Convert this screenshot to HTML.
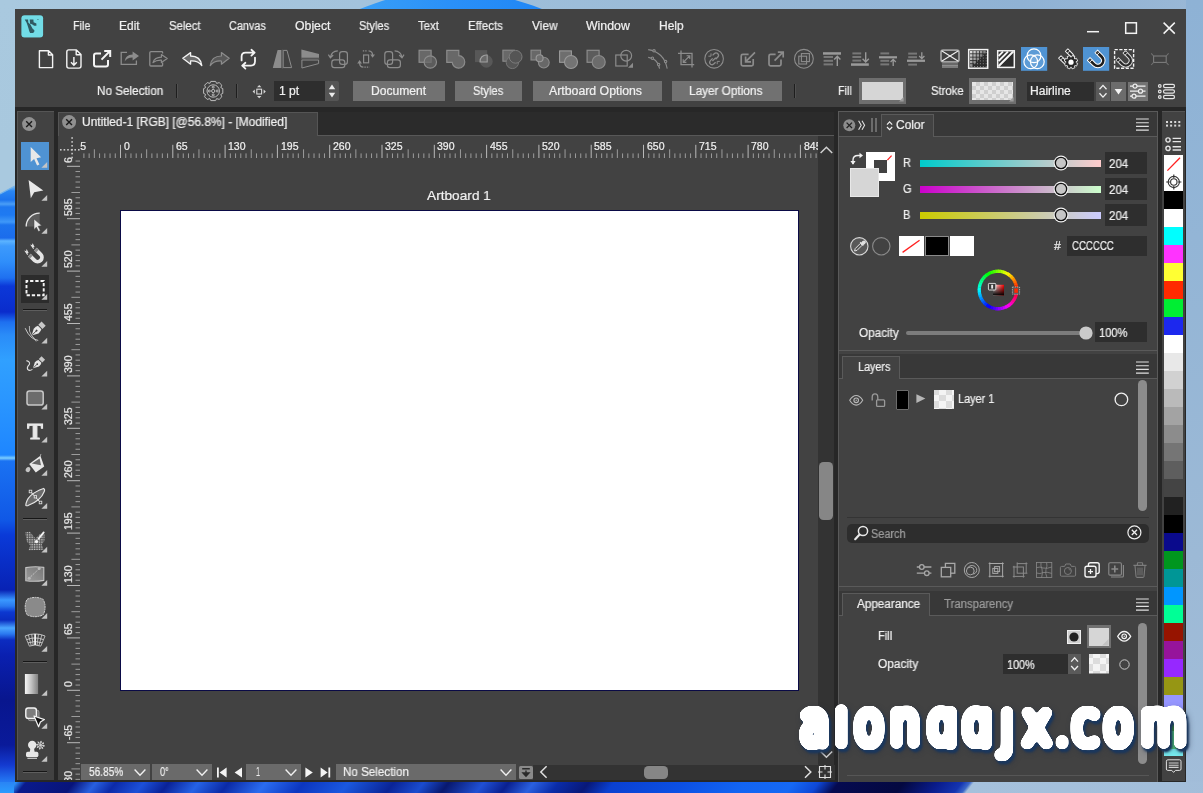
<!DOCTYPE html>
<html><head><meta charset="utf-8"><title>Untitled-1</title>
<style>
html,body{margin:0;padding:0;}
body{width:1203px;height:793px;overflow:hidden;position:relative;background:#9fbdd9;font-family:"Liberation Sans",sans-serif;}
#root{position:absolute;left:0;top:0;width:1203px;height:793px;overflow:hidden;}
#root div,#root span.t,#root svg{position:absolute;}
span.t{white-space:nowrap;line-height:1;transform-origin:0 0;display:block;-webkit-text-stroke:0.22px currentColor;will-change:transform;}
svg{overflow:visible;}
</style></head><body><div id="root">
<div style="left:0px;top:0px;width:1203px;height:793px;background:linear-gradient(90deg,#a9c9df 0%,#a3c3dc 30%,#98b9d7 60%,#8fb2d4 85%,#9ab8d6 100%);"></div>
<div style="left:1186px;top:0px;width:17px;height:793px;background:linear-gradient(180deg,#8eb2d5 0%,#93b5d6 30%,#9cb9d6 70%,#a2bdd9 100%);"></div>
<svg style="left:0;top:0" width="1203" height="12" viewBox="0 0 1203 12"><defs><linearGradient id="tb" x1="0" x2="1"><stop offset="0" stop-color="#3aa0f6"/><stop offset="0.5" stop-color="#2a90f8"/><stop offset="1" stop-color="#1f86f5"/></linearGradient></defs><path d="M352 12 C372 4 385 0 395 -3 L505 -3 C522 2 535 6 550 12 Z" fill="url(#tb)"/></svg>
<div style="left:0px;top:0px;width:15px;height:793px;background:linear-gradient(180deg,#a9c9df 0.00%,#a8c8de 18.92%,#a9c9e0 23.20%,#5aa6ee 23.71%,#2a86f2 24.09%,#1c74ee 25.22%,#4a9ef6 25.73%,#1e78f0 26.10%,#1e7af2 27.11%,#3f98f8 27.99%,#1d74ee 28.37%,#1b6cec 30.01%,#5cb4ff 30.39%,#3d9afc 31.02%,#2f8efa 33.04%,#1f70f0 35.06%,#0c38d8 36.07%,#0a2ccc 39.34%,#1e70f0 40.61%,#2a8cf8 42.24%,#30a0ff 45.40%,#2a96ff 50.44%,#1e86ff 57.38%,#7cceff 57.76%,#1a72f2 58.13%,#1058e6 65.57%,#0a3ad8 67.47%,#0822b4 74.40%,#3a98ff 75.66%,#2a7af0 76.42%,#0c38d0 77.18%,#0a2cc0 78.18%,#4aa6ff 79.19%,#2a78f0 79.95%,#0c2cc0 80.71%,#0a20b0 82.60%,#08168e 88.27%,#0a1a9a 93.95%,#143ad0 96.47%,#2272f0 98.36%,#2a94ff 100.00%);"></div>
<svg style="left:0;top:150px" width="15" height="60" viewBox="0 150 15 60"><path d="M0 150 H15 V186 L0 194 Z" fill="#a9c9df"/><path d="M0 194 L15 186" stroke="#6fb2ee" stroke-width="1.2"/></svg>
<div style="left:0;top:782px;width:1203px;height:11px;overflow:hidden;"><div style="left:-24px;top:0;width:1260px;height:11px;transform:skewX(-38deg);background:linear-gradient(90deg,#2aa0ff 1.90%,#2a8cf5 2.86%,#0a1a8c 3.65%,#08147a 7.46%,#2860e0 9.21%,#0c2aa8 10.79%,#1c50d8 13.02%,#0a2298 15.00%,#2562e6 17.38%,#0b2aa6 19.76%,#2a6cf0 22.70%,#0c36c0 25.71%,#1a58e0 29.29%,#0a2496 32.86%,#1a4cd0 35.24%,#08186e 37.22%,#2050d4 40.00%,#0a2090 41.98%,#2a60e0 43.97%,#0a2ca8 45.95%,#081878 48.33%,#0a40d0 50.32%,#0c50e4 55.87%,#1264f2 60.63%,#1568f4 64.60%,#0e48d8 66.59%,#050a50 68.17%,#040840 73.33%,#0a1c8c 76.11%,#1434b0 77.94%,#3a66c8 78.57%,#a5c1dc 78.89%,#a2bdd9 101.11%);"></div></div>
<div style="left:0px;top:782px;width:14px;height:11px;background:linear-gradient(180deg,#2a84f4,#2a9cff);"></div>
<div style="left:15px;top:9px;width:1171px;height:773px;background:#424242;"></div>
<div style="left:15px;top:107px;width:1171px;height:675px;background:#272727;"></div>
<svg style="left:20.6px;top:14.5px;" width="23.2" height="23.2" viewBox="0 0 23.2 23.2"><rect x="0.1" y="0.1" width="22.3" height="22.6" rx="3.2" fill="#3a3030"/><rect x="0.35" y="0.35" width="21.8" height="22.1" rx="3" fill="#72dce6"/><g transform="translate(-0.7 -0.3)"><path d="M4.4 4.7 H7.8 L8 7.7 L10.1 9.8 L11.4 12.3 L12.2 13.7 L14 15.5 L14.2 16.6 L12.9 18.2 H9.8 L9 16.6 L8.3 14.1 L7.3 10.9 L6.2 7.7 Z" fill="#2f5a62"/><path d="M9.4 4.7 H13.1 L13.3 7.5 L16.1 8.8 V11.1 H13.8 L11.7 9.5 L9.8 9 Z" fill="#2f5a62"/><rect x="17.2" y="4.4" width="0.9" height="0.9" fill="#2f5a62"/></g></svg>
<span class="t" style="left:73.45px;top:19.84px;font-size:12px;color:#f0f0f0;transform:scaleX(0.8992);">File</span>
<span class="t" style="left:119.25px;top:19.84px;font-size:12px;color:#f0f0f0;transform:scaleX(0.9952);">Edit</span>
<span class="t" style="left:169.25px;top:19.84px;font-size:12px;color:#f0f0f0;transform:scaleX(0.9475);">Select</span>
<span class="t" style="left:229.45px;top:19.84px;font-size:12px;color:#f0f0f0;transform:scaleX(0.9042);">Canvas</span>
<span class="t" style="left:294.95px;top:19.84px;font-size:12px;color:#f0f0f0;transform:scaleX(1.0231);">Object</span>
<span class="t" style="left:358.85px;top:19.84px;font-size:12px;color:#f0f0f0;transform:scaleX(0.9205);">Styles</span>
<span class="t" style="left:418.05px;top:19.84px;font-size:12px;color:#f0f0f0;transform:scaleX(0.9455);">Text</span>
<span class="t" style="left:468.05px;top:19.84px;font-size:12px;color:#f0f0f0;transform:scaleX(0.9547);">Effects</span>
<span class="t" style="left:531.95px;top:19.84px;font-size:12px;color:#f0f0f0;transform:scaleX(0.9865);">View</span>
<span class="t" style="left:586.15px;top:19.84px;font-size:12px;color:#f0f0f0;transform:scaleX(1.0258);">Window</span>
<span class="t" style="left:659.05px;top:19.84px;font-size:12px;color:#f0f0f0;transform:scaleX(0.9960);">Help</span>
<svg style="left:1080px;top:15px;" width="100" height="26" viewBox="0 0 100 26"><path d="M7 16.7 H19" stroke="#f4f4f4" stroke-width="1.5" fill="none"/><rect x="45.7" y="7.8" width="10.7" height="10.5" stroke="#f4f4f4" stroke-width="1.5" fill="none"/><path d="M83.6 7.6 L94.8 18.6 M94.8 7.6 L83.6 18.6" stroke="#f4f4f4" stroke-width="1.5" fill="none"/></svg>
<span class="t" style="left:96.95px;top:84.84px;font-size:12px;color:#f0f0f0;transform:scaleX(0.9743);">No Selection</span>
<div style="left:176px;top:84px;width:1px;height:14px;background:#1e1e1e;"></div>
<div style="left:177px;top:84px;width:1px;height:14px;background:#505050;"></div>
<div style="left:236px;top:84px;width:1px;height:14px;background:#1e1e1e;"></div>
<div style="left:237px;top:84px;width:1px;height:14px;background:#505050;"></div>
<div style="left:274px;top:81px;width:51px;height:20px;background:#2e2e2e;"></div>
<div style="left:324.6px;top:81px;width:14.2px;height:20px;background:#555555;border-radius:0 2px 2px 0;"></div>
<span class="t" style="left:279.25px;top:84.84px;font-size:12px;color:#f0f0f0;transform:scaleX(1.0100);">1 pt</span>
<svg style="left:325px;top:81px;" width="14" height="20" viewBox="0 0 14 20"><path d="M3.8 8.2 L7 3.4 L10.2 8.2 Z M3.8 11.8 L7 16.6 L10.2 11.8 Z" fill="#ececec"/></svg>
<div style="left:353px;top:81px;width:91.8px;height:20px;background:#717171;"></div>
<span class="t" style="left:370.85px;top:84.84px;font-size:12px;color:#f0f0f0;transform:scaleX(1.0091);">Document</span>
<div style="left:455.4px;top:81px;width:66.6px;height:20px;background:#717171;"></div>
<span class="t" style="left:472.65px;top:84.84px;font-size:12px;color:#f0f0f0;transform:scaleX(0.9235);">Styles</span>
<div style="left:532.7px;top:81px;width:129.3px;height:20px;background:#717171;"></div>
<span class="t" style="left:549.25px;top:84.84px;font-size:12px;color:#f0f0f0;transform:scaleX(1.0254);">Artboard Options</span>
<div style="left:672.3px;top:81px;width:110px;height:20px;background:#717171;"></div>
<span class="t" style="left:689.45px;top:84.84px;font-size:12px;color:#f0f0f0;transform:scaleX(0.9826);">Layer Options</span>
<div style="left:793.5px;top:84px;width:1px;height:14px;background:#1e1e1e;"></div>
<div style="left:794.5px;top:84px;width:1px;height:14px;background:#505050;"></div>
<span class="t" style="left:838.45px;top:85.44px;font-size:12px;color:#f0f0f0;transform:scaleX(0.8990);">Fill</span>
<div style="left:858.5px;top:78.2px;width:47.3px;height:25.8px;background:#6e6e6e;"></div>
<div style="left:861.7px;top:81.6px;width:41.4px;height:18.8px;background:#d6d6d6;"></div>
<svg style="left:899.4px;top:97px;" width="4.6" height="4.6" viewBox="0 0 4.6 4.6"><path d="M4.6 0 V4.6 H0 Z" fill="#9c9c9c"/></svg>
<span class="t" style="left:930.55px;top:85.44px;font-size:12px;color:#f0f0f0;transform:scaleX(0.9424);">Stroke</span>
<div style="left:968.5px;top:78.2px;width:47.3px;height:25.8px;background:#6e6e6e;"></div>
<div style="left:971.7px;top:81.6px;width:41.4px;height:18.8px;background:#e6e6e6;background-image:linear-gradient(45deg,#cfcfcf 25%,transparent 25%,transparent 75%,#cfcfcf 75%),linear-gradient(45deg,#cfcfcf 25%,transparent 25%,transparent 75%,#cfcfcf 75%);background-size:8px 8px;background-position:0 0,4px 4px;"></div>
<svg style="left:1009.4px;top:97px;" width="4.6" height="4.6" viewBox="0 0 4.6 4.6"><path d="M4.6 0 V4.6 H0 Z" fill="#9c9c9c"/></svg>
<div style="left:1026.5px;top:82px;width:67.5px;height:18.5px;background:#2e2e2e;"></div>
<span class="t" style="left:1030.45px;top:85.44px;font-size:12px;color:#f0f0f0;transform:scaleX(1.0025);">Hairline</span>
<div style="left:1096px;top:82px;width:14px;height:18.5px;background:#5a5a5a;"></div>
<svg style="left:1096px;top:82px;" width="14" height="18.5" viewBox="0 0 14 18.5"><path d="M3.5 7.2 L7 3.4 L10.5 7.2 M3.5 11.3 L7 15.1 L10.5 11.3" stroke="#f0f0f0" stroke-width="1.3" fill="none"/></svg>
<div style="left:1110.5px;top:82px;width:15px;height:18.5px;background:#6c6c6c;"></div>
<svg style="left:1110.5px;top:82px;" width="15" height="18.5" viewBox="0 0 15 18.5"><path d="M3.6 7 H11.4 L7.5 12.6 Z" fill="#f4f4f4"/></svg>
<div style="left:1128px;top:82px;width:19.5px;height:18.5px;background:#737373;"></div>
<svg style="left:1128px;top:82px;" width="19.5" height="18.5" viewBox="0 0 19.5 18.5"><g stroke="#f0f0f0" stroke-width="1.2" fill="#737373"><path d="M2 4.2 H17.5 M2 9.2 H17.5 M2 14.2 H17.5"/><circle cx="7" cy="4.2" r="2"/><circle cx="12.5" cy="9.2" r="2"/><circle cx="6" cy="14.2" r="2"/></g></svg>
<svg style="left:1157px;top:83px;" width="20" height="18" viewBox="0 0 20 18"><g stroke="#e4e4e4" stroke-width="1.2" fill="none"><circle cx="2.8" cy="3" r="1.3"/><circle cx="2.8" cy="8.5" r="1.3"/><circle cx="2.8" cy="14" r="1.3"/><rect x="6.5" y="1.4" width="11" height="3.2" rx="1.6"/><rect x="6.5" y="6.9" width="11" height="3.2" rx="1.6"/><rect x="6.5" y="12.4" width="11" height="3.2" rx="1.6"/></g></svg>
<div style="left:17px;top:111px;width:37px;height:669px;background:#424242;border-left:1px solid #555;border-top:1px solid #555;box-sizing:border-box;"></div>
<svg style="left:21.9px;top:116.8px;" width="14.2" height="14.2" viewBox="0 0 14.2 14.2"><circle cx="7.1" cy="7.1" r="7" fill="#909090"/><path d="M4.2 4.2 L10 10 M10 4.2 L4.2 10" stroke="#1c1c1c" stroke-width="1.4"/></svg>
<div style="left:21px;top:142px;width:28px;height:28px;background:#4f93d3;"></div>
<div style="left:21px;top:274.5px;width:28px;height:28px;background:#2c2c2c;"></div>
<div style="left:23px;top:309px;width:24px;height:1px;background:#161616;"></div>
<div style="left:23px;top:310px;width:24px;height:1px;background:#5e5e5e;"></div>
<div style="left:23px;top:518px;width:24px;height:1px;background:#161616;"></div>
<div style="left:23px;top:519px;width:24px;height:1px;background:#5e5e5e;"></div>
<div style="left:23px;top:661px;width:24px;height:1px;background:#161616;"></div>
<div style="left:23px;top:662px;width:24px;height:1px;background:#5e5e5e;"></div>
<div style="left:23px;top:771px;width:24px;height:1px;background:#161616;"></div>
<div style="left:23px;top:772px;width:24px;height:1px;background:#5e5e5e;"></div>
<div style="left:58px;top:112px;width:776.3px;height:668px;background:#424242;"></div>
<div style="left:58px;top:112px;width:776.3px;height:23.5px;background:#2b2b2b;"></div>
<div style="left:58px;top:135.3px;width:776.3px;height:1px;background:#585858;"></div>
<div style="left:58px;top:112px;width:260.4px;height:24.3px;background:#424242;border-top:1px solid #555;border-left:1px solid #555;border-right:1px solid #555;box-sizing:border-box;"></div>
<svg style="left:61.9px;top:114.8px;" width="14.2" height="14.2" viewBox="0 0 14.2 14.2"><circle cx="7.1" cy="7.1" r="7" fill="#909090"/><path d="M4.2 4.2 L10 10 M10 4.2 L4.2 10" stroke="#1c1c1c" stroke-width="1.4"/></svg>
<span class="t" style="left:81.65px;top:115.84px;font-size:12px;color:#f0f0f0;transform:scaleX(0.9952);">Untitled-1 [RGB] [@56.8%] - [Modified]</span>
<div style="left:818.2px;top:136.3px;width:16px;height:644px;background:#333333;"></div>
<div style="left:533px;top:764.5px;width:301.5px;height:15.5px;background:#333333;"></div>
<svg style="left:819px;top:144px;" width="15" height="12" viewBox="0 0 15 12"><path d="M1.6 9 L7.4 3.2 L13.2 9" stroke="#d0d0d0" stroke-width="1.5" fill="none"/></svg>
<svg style="left:819px;top:748px;" width="15" height="12" viewBox="0 0 15 12"><path d="M1.6 3.5 L7.4 9.3 L13.2 3.5" stroke="#d0d0d0" stroke-width="1.5" fill="none"/></svg>
<div style="left:819.2px;top:461.6px;width:13.8px;height:58.2px;background:#868686;border-radius:4.5px;"></div>
<div style="left:643.5px;top:765.6px;width:24.5px;height:13.6px;background:#868686;border-radius:4.5px;"></div>
<svg style="left:538px;top:765px;" width="12" height="14" viewBox="0 0 12 14"><path d="M8.6 1.2 L2.8 7 L8.6 12.8" stroke="#e0e0e0" stroke-width="1.5" fill="none"/></svg>
<svg style="left:802px;top:765px;" width="12" height="14" viewBox="0 0 12 14"><path d="M3 1.2 L8.8 7 L3 12.8" stroke="#e0e0e0" stroke-width="1.5" fill="none"/></svg>
<svg style="left:818px;top:765px;" width="15" height="15" viewBox="0 0 15 15"><path d="M1.5 1.5 H12.5 V12.5 H1.5 Z M7 0 V4.5 M7 9.5 V14 M0 7 H4.5 M9.5 7 H14" stroke="#e0e0e0" stroke-width="1.1" fill="none"/></svg>
<div style="left:120px;top:210px;width:679px;height:481px;background:#0a0a46;"></div>
<div style="left:121px;top:211px;width:677px;height:479px;background:#ffffff;"></div>
<span class="t" style="left:426.85px;top:188.50px;font-size:13.7px;color:#f2f2f2;transform:scaleX(0.9977);">Artboard 1</span>
<svg style="left:0px;top:0px;shape-rendering:auto;" width="835" height="781" viewBox="0 0 835 781"><rect x="83.39" y="153.4" width="1" height="4.6" fill="#9c9c9c"/><rect x="88.62" y="153.4" width="1" height="4.6" fill="#9c9c9c"/><rect x="93.85" y="149.3" width="1" height="8.7" fill="#9c9c9c"/><rect x="99.08" y="153.4" width="1" height="4.6" fill="#9c9c9c"/><rect x="104.31" y="153.4" width="1" height="4.6" fill="#9c9c9c"/><rect x="109.54" y="153.4" width="1" height="4.6" fill="#9c9c9c"/><rect x="114.77" y="153.4" width="1" height="4.6" fill="#9c9c9c"/><rect x="120.00" y="144.8" width="1" height="13.2" fill="#b8b8b8"/><rect x="125.23" y="153.4" width="1" height="4.6" fill="#9c9c9c"/><rect x="130.46" y="153.4" width="1" height="4.6" fill="#9c9c9c"/><rect x="135.69" y="153.4" width="1" height="4.6" fill="#9c9c9c"/><rect x="140.92" y="153.4" width="1" height="4.6" fill="#9c9c9c"/><rect x="146.15" y="149.3" width="1" height="8.7" fill="#9c9c9c"/><rect x="151.38" y="153.4" width="1" height="4.6" fill="#9c9c9c"/><rect x="156.61" y="153.4" width="1" height="4.6" fill="#9c9c9c"/><rect x="161.84" y="153.4" width="1" height="4.6" fill="#9c9c9c"/><rect x="167.07" y="153.4" width="1" height="4.6" fill="#9c9c9c"/><rect x="172.30" y="144.8" width="1" height="13.2" fill="#b8b8b8"/><rect x="177.53" y="153.4" width="1" height="4.6" fill="#9c9c9c"/><rect x="182.76" y="153.4" width="1" height="4.6" fill="#9c9c9c"/><rect x="187.99" y="153.4" width="1" height="4.6" fill="#9c9c9c"/><rect x="193.22" y="153.4" width="1" height="4.6" fill="#9c9c9c"/><rect x="198.45" y="149.3" width="1" height="8.7" fill="#9c9c9c"/><rect x="203.68" y="153.4" width="1" height="4.6" fill="#9c9c9c"/><rect x="208.91" y="153.4" width="1" height="4.6" fill="#9c9c9c"/><rect x="214.14" y="153.4" width="1" height="4.6" fill="#9c9c9c"/><rect x="219.37" y="153.4" width="1" height="4.6" fill="#9c9c9c"/><rect x="224.60" y="144.8" width="1" height="13.2" fill="#b8b8b8"/><rect x="229.83" y="153.4" width="1" height="4.6" fill="#9c9c9c"/><rect x="235.06" y="153.4" width="1" height="4.6" fill="#9c9c9c"/><rect x="240.29" y="153.4" width="1" height="4.6" fill="#9c9c9c"/><rect x="245.52" y="153.4" width="1" height="4.6" fill="#9c9c9c"/><rect x="250.75" y="149.3" width="1" height="8.7" fill="#9c9c9c"/><rect x="255.98" y="153.4" width="1" height="4.6" fill="#9c9c9c"/><rect x="261.21" y="153.4" width="1" height="4.6" fill="#9c9c9c"/><rect x="266.44" y="153.4" width="1" height="4.6" fill="#9c9c9c"/><rect x="271.67" y="153.4" width="1" height="4.6" fill="#9c9c9c"/><rect x="276.90" y="144.8" width="1" height="13.2" fill="#b8b8b8"/><rect x="282.13" y="153.4" width="1" height="4.6" fill="#9c9c9c"/><rect x="287.36" y="153.4" width="1" height="4.6" fill="#9c9c9c"/><rect x="292.59" y="153.4" width="1" height="4.6" fill="#9c9c9c"/><rect x="297.82" y="153.4" width="1" height="4.6" fill="#9c9c9c"/><rect x="303.05" y="149.3" width="1" height="8.7" fill="#9c9c9c"/><rect x="308.28" y="153.4" width="1" height="4.6" fill="#9c9c9c"/><rect x="313.51" y="153.4" width="1" height="4.6" fill="#9c9c9c"/><rect x="318.74" y="153.4" width="1" height="4.6" fill="#9c9c9c"/><rect x="323.97" y="153.4" width="1" height="4.6" fill="#9c9c9c"/><rect x="329.20" y="144.8" width="1" height="13.2" fill="#b8b8b8"/><rect x="334.43" y="153.4" width="1" height="4.6" fill="#9c9c9c"/><rect x="339.66" y="153.4" width="1" height="4.6" fill="#9c9c9c"/><rect x="344.89" y="153.4" width="1" height="4.6" fill="#9c9c9c"/><rect x="350.12" y="153.4" width="1" height="4.6" fill="#9c9c9c"/><rect x="355.35" y="149.3" width="1" height="8.7" fill="#9c9c9c"/><rect x="360.58" y="153.4" width="1" height="4.6" fill="#9c9c9c"/><rect x="365.81" y="153.4" width="1" height="4.6" fill="#9c9c9c"/><rect x="371.04" y="153.4" width="1" height="4.6" fill="#9c9c9c"/><rect x="376.27" y="153.4" width="1" height="4.6" fill="#9c9c9c"/><rect x="381.50" y="144.8" width="1" height="13.2" fill="#b8b8b8"/><rect x="386.73" y="153.4" width="1" height="4.6" fill="#9c9c9c"/><rect x="391.96" y="153.4" width="1" height="4.6" fill="#9c9c9c"/><rect x="397.19" y="153.4" width="1" height="4.6" fill="#9c9c9c"/><rect x="402.42" y="153.4" width="1" height="4.6" fill="#9c9c9c"/><rect x="407.65" y="149.3" width="1" height="8.7" fill="#9c9c9c"/><rect x="412.88" y="153.4" width="1" height="4.6" fill="#9c9c9c"/><rect x="418.11" y="153.4" width="1" height="4.6" fill="#9c9c9c"/><rect x="423.34" y="153.4" width="1" height="4.6" fill="#9c9c9c"/><rect x="428.57" y="153.4" width="1" height="4.6" fill="#9c9c9c"/><rect x="433.80" y="144.8" width="1" height="13.2" fill="#b8b8b8"/><rect x="439.03" y="153.4" width="1" height="4.6" fill="#9c9c9c"/><rect x="444.26" y="153.4" width="1" height="4.6" fill="#9c9c9c"/><rect x="449.49" y="153.4" width="1" height="4.6" fill="#9c9c9c"/><rect x="454.72" y="153.4" width="1" height="4.6" fill="#9c9c9c"/><rect x="459.95" y="149.3" width="1" height="8.7" fill="#9c9c9c"/><rect x="465.18" y="153.4" width="1" height="4.6" fill="#9c9c9c"/><rect x="470.41" y="153.4" width="1" height="4.6" fill="#9c9c9c"/><rect x="475.64" y="153.4" width="1" height="4.6" fill="#9c9c9c"/><rect x="480.87" y="153.4" width="1" height="4.6" fill="#9c9c9c"/><rect x="486.10" y="144.8" width="1" height="13.2" fill="#b8b8b8"/><rect x="491.33" y="153.4" width="1" height="4.6" fill="#9c9c9c"/><rect x="496.56" y="153.4" width="1" height="4.6" fill="#9c9c9c"/><rect x="501.79" y="153.4" width="1" height="4.6" fill="#9c9c9c"/><rect x="507.02" y="153.4" width="1" height="4.6" fill="#9c9c9c"/><rect x="512.25" y="149.3" width="1" height="8.7" fill="#9c9c9c"/><rect x="517.48" y="153.4" width="1" height="4.6" fill="#9c9c9c"/><rect x="522.71" y="153.4" width="1" height="4.6" fill="#9c9c9c"/><rect x="527.94" y="153.4" width="1" height="4.6" fill="#9c9c9c"/><rect x="533.17" y="153.4" width="1" height="4.6" fill="#9c9c9c"/><rect x="538.40" y="144.8" width="1" height="13.2" fill="#b8b8b8"/><rect x="543.63" y="153.4" width="1" height="4.6" fill="#9c9c9c"/><rect x="548.86" y="153.4" width="1" height="4.6" fill="#9c9c9c"/><rect x="554.09" y="153.4" width="1" height="4.6" fill="#9c9c9c"/><rect x="559.32" y="153.4" width="1" height="4.6" fill="#9c9c9c"/><rect x="564.55" y="149.3" width="1" height="8.7" fill="#9c9c9c"/><rect x="569.78" y="153.4" width="1" height="4.6" fill="#9c9c9c"/><rect x="575.01" y="153.4" width="1" height="4.6" fill="#9c9c9c"/><rect x="580.24" y="153.4" width="1" height="4.6" fill="#9c9c9c"/><rect x="585.47" y="153.4" width="1" height="4.6" fill="#9c9c9c"/><rect x="590.70" y="144.8" width="1" height="13.2" fill="#b8b8b8"/><rect x="595.93" y="153.4" width="1" height="4.6" fill="#9c9c9c"/><rect x="601.16" y="153.4" width="1" height="4.6" fill="#9c9c9c"/><rect x="606.39" y="153.4" width="1" height="4.6" fill="#9c9c9c"/><rect x="611.62" y="153.4" width="1" height="4.6" fill="#9c9c9c"/><rect x="616.85" y="149.3" width="1" height="8.7" fill="#9c9c9c"/><rect x="622.08" y="153.4" width="1" height="4.6" fill="#9c9c9c"/><rect x="627.31" y="153.4" width="1" height="4.6" fill="#9c9c9c"/><rect x="632.54" y="153.4" width="1" height="4.6" fill="#9c9c9c"/><rect x="637.77" y="153.4" width="1" height="4.6" fill="#9c9c9c"/><rect x="643.00" y="144.8" width="1" height="13.2" fill="#b8b8b8"/><rect x="648.23" y="153.4" width="1" height="4.6" fill="#9c9c9c"/><rect x="653.46" y="153.4" width="1" height="4.6" fill="#9c9c9c"/><rect x="658.69" y="153.4" width="1" height="4.6" fill="#9c9c9c"/><rect x="663.92" y="153.4" width="1" height="4.6" fill="#9c9c9c"/><rect x="669.15" y="149.3" width="1" height="8.7" fill="#9c9c9c"/><rect x="674.38" y="153.4" width="1" height="4.6" fill="#9c9c9c"/><rect x="679.61" y="153.4" width="1" height="4.6" fill="#9c9c9c"/><rect x="684.84" y="153.4" width="1" height="4.6" fill="#9c9c9c"/><rect x="690.07" y="153.4" width="1" height="4.6" fill="#9c9c9c"/><rect x="695.30" y="144.8" width="1" height="13.2" fill="#b8b8b8"/><rect x="700.53" y="153.4" width="1" height="4.6" fill="#9c9c9c"/><rect x="705.76" y="153.4" width="1" height="4.6" fill="#9c9c9c"/><rect x="710.99" y="153.4" width="1" height="4.6" fill="#9c9c9c"/><rect x="716.22" y="153.4" width="1" height="4.6" fill="#9c9c9c"/><rect x="721.45" y="149.3" width="1" height="8.7" fill="#9c9c9c"/><rect x="726.68" y="153.4" width="1" height="4.6" fill="#9c9c9c"/><rect x="731.91" y="153.4" width="1" height="4.6" fill="#9c9c9c"/><rect x="737.14" y="153.4" width="1" height="4.6" fill="#9c9c9c"/><rect x="742.37" y="153.4" width="1" height="4.6" fill="#9c9c9c"/><rect x="747.60" y="144.8" width="1" height="13.2" fill="#b8b8b8"/><rect x="752.83" y="153.4" width="1" height="4.6" fill="#9c9c9c"/><rect x="758.06" y="153.4" width="1" height="4.6" fill="#9c9c9c"/><rect x="763.29" y="153.4" width="1" height="4.6" fill="#9c9c9c"/><rect x="768.52" y="153.4" width="1" height="4.6" fill="#9c9c9c"/><rect x="773.75" y="149.3" width="1" height="8.7" fill="#9c9c9c"/><rect x="778.98" y="153.4" width="1" height="4.6" fill="#9c9c9c"/><rect x="784.21" y="153.4" width="1" height="4.6" fill="#9c9c9c"/><rect x="789.44" y="153.4" width="1" height="4.6" fill="#9c9c9c"/><rect x="794.67" y="153.4" width="1" height="4.6" fill="#9c9c9c"/><rect x="799.90" y="144.8" width="1" height="13.2" fill="#b8b8b8"/><rect x="805.13" y="153.4" width="1" height="4.6" fill="#9c9c9c"/><rect x="810.36" y="153.4" width="1" height="4.6" fill="#9c9c9c"/><rect x="815.59" y="153.4" width="1" height="4.6" fill="#9c9c9c"/><rect x="75.5" y="778.88" width="4.5" height="1" fill="#9c9c9c"/><rect x="75.5" y="773.64" width="4.5" height="1" fill="#9c9c9c"/><rect x="71.4" y="768.40" width="8.6" height="1" fill="#9c9c9c"/><rect x="75.5" y="763.16" width="4.5" height="1" fill="#9c9c9c"/><rect x="75.5" y="757.92" width="4.5" height="1" fill="#9c9c9c"/><rect x="75.5" y="752.68" width="4.5" height="1" fill="#9c9c9c"/><rect x="75.5" y="747.44" width="4.5" height="1" fill="#9c9c9c"/><rect x="67" y="742.20" width="13" height="1" fill="#b8b8b8"/><rect x="75.5" y="736.96" width="4.5" height="1" fill="#9c9c9c"/><rect x="75.5" y="731.72" width="4.5" height="1" fill="#9c9c9c"/><rect x="75.5" y="726.48" width="4.5" height="1" fill="#9c9c9c"/><rect x="75.5" y="721.24" width="4.5" height="1" fill="#9c9c9c"/><rect x="71.4" y="716.00" width="8.6" height="1" fill="#9c9c9c"/><rect x="75.5" y="710.76" width="4.5" height="1" fill="#9c9c9c"/><rect x="75.5" y="705.52" width="4.5" height="1" fill="#9c9c9c"/><rect x="75.5" y="700.28" width="4.5" height="1" fill="#9c9c9c"/><rect x="75.5" y="695.04" width="4.5" height="1" fill="#9c9c9c"/><rect x="67" y="689.80" width="13" height="1" fill="#b8b8b8"/><rect x="75.5" y="684.56" width="4.5" height="1" fill="#9c9c9c"/><rect x="75.5" y="679.32" width="4.5" height="1" fill="#9c9c9c"/><rect x="75.5" y="674.08" width="4.5" height="1" fill="#9c9c9c"/><rect x="75.5" y="668.84" width="4.5" height="1" fill="#9c9c9c"/><rect x="71.4" y="663.60" width="8.6" height="1" fill="#9c9c9c"/><rect x="75.5" y="658.36" width="4.5" height="1" fill="#9c9c9c"/><rect x="75.5" y="653.12" width="4.5" height="1" fill="#9c9c9c"/><rect x="75.5" y="647.88" width="4.5" height="1" fill="#9c9c9c"/><rect x="75.5" y="642.64" width="4.5" height="1" fill="#9c9c9c"/><rect x="67" y="637.40" width="13" height="1" fill="#b8b8b8"/><rect x="75.5" y="632.16" width="4.5" height="1" fill="#9c9c9c"/><rect x="75.5" y="626.92" width="4.5" height="1" fill="#9c9c9c"/><rect x="75.5" y="621.68" width="4.5" height="1" fill="#9c9c9c"/><rect x="75.5" y="616.44" width="4.5" height="1" fill="#9c9c9c"/><rect x="71.4" y="611.20" width="8.6" height="1" fill="#9c9c9c"/><rect x="75.5" y="605.96" width="4.5" height="1" fill="#9c9c9c"/><rect x="75.5" y="600.72" width="4.5" height="1" fill="#9c9c9c"/><rect x="75.5" y="595.48" width="4.5" height="1" fill="#9c9c9c"/><rect x="75.5" y="590.24" width="4.5" height="1" fill="#9c9c9c"/><rect x="67" y="585.00" width="13" height="1" fill="#b8b8b8"/><rect x="75.5" y="579.76" width="4.5" height="1" fill="#9c9c9c"/><rect x="75.5" y="574.52" width="4.5" height="1" fill="#9c9c9c"/><rect x="75.5" y="569.28" width="4.5" height="1" fill="#9c9c9c"/><rect x="75.5" y="564.04" width="4.5" height="1" fill="#9c9c9c"/><rect x="71.4" y="558.80" width="8.6" height="1" fill="#9c9c9c"/><rect x="75.5" y="553.56" width="4.5" height="1" fill="#9c9c9c"/><rect x="75.5" y="548.32" width="4.5" height="1" fill="#9c9c9c"/><rect x="75.5" y="543.08" width="4.5" height="1" fill="#9c9c9c"/><rect x="75.5" y="537.84" width="4.5" height="1" fill="#9c9c9c"/><rect x="67" y="532.60" width="13" height="1" fill="#b8b8b8"/><rect x="75.5" y="527.36" width="4.5" height="1" fill="#9c9c9c"/><rect x="75.5" y="522.12" width="4.5" height="1" fill="#9c9c9c"/><rect x="75.5" y="516.88" width="4.5" height="1" fill="#9c9c9c"/><rect x="75.5" y="511.64" width="4.5" height="1" fill="#9c9c9c"/><rect x="71.4" y="506.40" width="8.6" height="1" fill="#9c9c9c"/><rect x="75.5" y="501.16" width="4.5" height="1" fill="#9c9c9c"/><rect x="75.5" y="495.92" width="4.5" height="1" fill="#9c9c9c"/><rect x="75.5" y="490.68" width="4.5" height="1" fill="#9c9c9c"/><rect x="75.5" y="485.44" width="4.5" height="1" fill="#9c9c9c"/><rect x="67" y="480.20" width="13" height="1" fill="#b8b8b8"/><rect x="75.5" y="474.96" width="4.5" height="1" fill="#9c9c9c"/><rect x="75.5" y="469.72" width="4.5" height="1" fill="#9c9c9c"/><rect x="75.5" y="464.48" width="4.5" height="1" fill="#9c9c9c"/><rect x="75.5" y="459.24" width="4.5" height="1" fill="#9c9c9c"/><rect x="71.4" y="454.00" width="8.6" height="1" fill="#9c9c9c"/><rect x="75.5" y="448.76" width="4.5" height="1" fill="#9c9c9c"/><rect x="75.5" y="443.52" width="4.5" height="1" fill="#9c9c9c"/><rect x="75.5" y="438.28" width="4.5" height="1" fill="#9c9c9c"/><rect x="75.5" y="433.04" width="4.5" height="1" fill="#9c9c9c"/><rect x="67" y="427.80" width="13" height="1" fill="#b8b8b8"/><rect x="75.5" y="422.56" width="4.5" height="1" fill="#9c9c9c"/><rect x="75.5" y="417.32" width="4.5" height="1" fill="#9c9c9c"/><rect x="75.5" y="412.08" width="4.5" height="1" fill="#9c9c9c"/><rect x="75.5" y="406.84" width="4.5" height="1" fill="#9c9c9c"/><rect x="71.4" y="401.60" width="8.6" height="1" fill="#9c9c9c"/><rect x="75.5" y="396.36" width="4.5" height="1" fill="#9c9c9c"/><rect x="75.5" y="391.12" width="4.5" height="1" fill="#9c9c9c"/><rect x="75.5" y="385.88" width="4.5" height="1" fill="#9c9c9c"/><rect x="75.5" y="380.64" width="4.5" height="1" fill="#9c9c9c"/><rect x="67" y="375.40" width="13" height="1" fill="#b8b8b8"/><rect x="75.5" y="370.16" width="4.5" height="1" fill="#9c9c9c"/><rect x="75.5" y="364.92" width="4.5" height="1" fill="#9c9c9c"/><rect x="75.5" y="359.68" width="4.5" height="1" fill="#9c9c9c"/><rect x="75.5" y="354.44" width="4.5" height="1" fill="#9c9c9c"/><rect x="71.4" y="349.20" width="8.6" height="1" fill="#9c9c9c"/><rect x="75.5" y="343.96" width="4.5" height="1" fill="#9c9c9c"/><rect x="75.5" y="338.72" width="4.5" height="1" fill="#9c9c9c"/><rect x="75.5" y="333.48" width="4.5" height="1" fill="#9c9c9c"/><rect x="75.5" y="328.24" width="4.5" height="1" fill="#9c9c9c"/><rect x="67" y="323.00" width="13" height="1" fill="#b8b8b8"/><rect x="75.5" y="317.76" width="4.5" height="1" fill="#9c9c9c"/><rect x="75.5" y="312.52" width="4.5" height="1" fill="#9c9c9c"/><rect x="75.5" y="307.28" width="4.5" height="1" fill="#9c9c9c"/><rect x="75.5" y="302.04" width="4.5" height="1" fill="#9c9c9c"/><rect x="71.4" y="296.80" width="8.6" height="1" fill="#9c9c9c"/><rect x="75.5" y="291.56" width="4.5" height="1" fill="#9c9c9c"/><rect x="75.5" y="286.32" width="4.5" height="1" fill="#9c9c9c"/><rect x="75.5" y="281.08" width="4.5" height="1" fill="#9c9c9c"/><rect x="75.5" y="275.84" width="4.5" height="1" fill="#9c9c9c"/><rect x="67" y="270.60" width="13" height="1" fill="#b8b8b8"/><rect x="75.5" y="265.36" width="4.5" height="1" fill="#9c9c9c"/><rect x="75.5" y="260.12" width="4.5" height="1" fill="#9c9c9c"/><rect x="75.5" y="254.88" width="4.5" height="1" fill="#9c9c9c"/><rect x="75.5" y="249.64" width="4.5" height="1" fill="#9c9c9c"/><rect x="71.4" y="244.40" width="8.6" height="1" fill="#9c9c9c"/><rect x="75.5" y="239.16" width="4.5" height="1" fill="#9c9c9c"/><rect x="75.5" y="233.92" width="4.5" height="1" fill="#9c9c9c"/><rect x="75.5" y="228.68" width="4.5" height="1" fill="#9c9c9c"/><rect x="75.5" y="223.44" width="4.5" height="1" fill="#9c9c9c"/><rect x="67" y="218.20" width="13" height="1" fill="#b8b8b8"/><rect x="75.5" y="212.96" width="4.5" height="1" fill="#9c9c9c"/><rect x="75.5" y="207.72" width="4.5" height="1" fill="#9c9c9c"/><rect x="75.5" y="202.48" width="4.5" height="1" fill="#9c9c9c"/><rect x="75.5" y="197.24" width="4.5" height="1" fill="#9c9c9c"/><rect x="71.4" y="192.00" width="8.6" height="1" fill="#9c9c9c"/><rect x="75.5" y="186.76" width="4.5" height="1" fill="#9c9c9c"/><rect x="75.5" y="181.52" width="4.5" height="1" fill="#9c9c9c"/><rect x="75.5" y="176.28" width="4.5" height="1" fill="#9c9c9c"/><rect x="75.5" y="171.04" width="4.5" height="1" fill="#9c9c9c"/><rect x="67" y="165.80" width="13" height="1" fill="#b8b8b8"/><rect x="75.5" y="160.56" width="4.5" height="1" fill="#9c9c9c"/><rect x="60.0" y="149" width="1.6" height="1.6" fill="#c8c8c8"/><rect x="71.3" y="137.2" width="1.6" height="1.6" fill="#c8c8c8"/><rect x="63.6" y="149" width="1.6" height="1.6" fill="#c8c8c8"/><rect x="71.3" y="141.1" width="1.6" height="1.6" fill="#c8c8c8"/><rect x="67.2" y="149" width="1.6" height="1.6" fill="#c8c8c8"/><rect x="71.3" y="145.0" width="1.6" height="1.6" fill="#c8c8c8"/><rect x="70.8" y="149" width="1.6" height="1.6" fill="#c8c8c8"/><rect x="71.3" y="148.9" width="1.6" height="1.6" fill="#c8c8c8"/><rect x="74.4" y="149" width="1.6" height="1.6" fill="#c8c8c8"/><rect x="71.3" y="152.8" width="1.6" height="1.6" fill="#c8c8c8"/><rect x="78.0" y="149" width="1.6" height="1.6" fill="#c8c8c8"/><rect x="71.3" y="156.7" width="1.6" height="1.6" fill="#c8c8c8"/></svg>
<div style="left:80.3px;top:136.3px;width:737.9000000000001px;height:24px;overflow:hidden;">
<span class="t" style="left:-8.90px;top:5.01px;font-size:10.5px;color:#f0f0f0;">-65</span>
<span class="t" style="left:43.40px;top:5.01px;font-size:10.5px;color:#f0f0f0;">0</span>
<span class="t" style="left:95.70px;top:5.01px;font-size:10.5px;color:#f0f0f0;">65</span>
<span class="t" style="left:148.00px;top:5.01px;font-size:10.5px;color:#f0f0f0;">130</span>
<span class="t" style="left:200.30px;top:5.01px;font-size:10.5px;color:#f0f0f0;">195</span>
<span class="t" style="left:252.60px;top:5.01px;font-size:10.5px;color:#f0f0f0;">260</span>
<span class="t" style="left:304.90px;top:5.01px;font-size:10.5px;color:#f0f0f0;">325</span>
<span class="t" style="left:357.20px;top:5.01px;font-size:10.5px;color:#f0f0f0;">390</span>
<span class="t" style="left:409.50px;top:5.01px;font-size:10.5px;color:#f0f0f0;">455</span>
<span class="t" style="left:461.80px;top:5.01px;font-size:10.5px;color:#f0f0f0;">520</span>
<span class="t" style="left:514.10px;top:5.01px;font-size:10.5px;color:#f0f0f0;">585</span>
<span class="t" style="left:566.40px;top:5.01px;font-size:10.5px;color:#f0f0f0;">650</span>
<span class="t" style="left:618.70px;top:5.01px;font-size:10.5px;color:#f0f0f0;">715</span>
<span class="t" style="left:671.00px;top:5.01px;font-size:10.5px;color:#f0f0f0;">780</span>
<span class="t" style="left:723.30px;top:5.01px;font-size:10.5px;color:#f0f0f0;">845</span>
</div>
<div style="left:58.5px;top:157px;width:22px;height:623px;overflow:hidden;will-change:transform;">
<span class="t" style="left:12.70px;top:635.10px;font-size:10.5px;color:#f0f0f0;transform-origin:0 0;transform:rotate(-90deg) scaleX(1.0) translateY(-8.89px);">-130</span>
<span class="t" style="left:12.70px;top:582.70px;font-size:10.5px;color:#f0f0f0;transform-origin:0 0;transform:rotate(-90deg) scaleX(1.0) translateY(-8.89px);">-65</span>
<span class="t" style="left:12.70px;top:530.30px;font-size:10.5px;color:#f0f0f0;transform-origin:0 0;transform:rotate(-90deg) scaleX(1.0) translateY(-8.89px);">0</span>
<span class="t" style="left:12.70px;top:477.90px;font-size:10.5px;color:#f0f0f0;transform-origin:0 0;transform:rotate(-90deg) scaleX(1.0) translateY(-8.89px);">65</span>
<span class="t" style="left:12.70px;top:425.50px;font-size:10.5px;color:#f0f0f0;transform-origin:0 0;transform:rotate(-90deg) scaleX(1.0) translateY(-8.89px);">130</span>
<span class="t" style="left:12.70px;top:373.10px;font-size:10.5px;color:#f0f0f0;transform-origin:0 0;transform:rotate(-90deg) scaleX(1.0) translateY(-8.89px);">195</span>
<span class="t" style="left:12.70px;top:320.70px;font-size:10.5px;color:#f0f0f0;transform-origin:0 0;transform:rotate(-90deg) scaleX(1.0) translateY(-8.89px);">260</span>
<span class="t" style="left:12.70px;top:268.30px;font-size:10.5px;color:#f0f0f0;transform-origin:0 0;transform:rotate(-90deg) scaleX(1.0) translateY(-8.89px);">325</span>
<span class="t" style="left:12.70px;top:215.90px;font-size:10.5px;color:#f0f0f0;transform-origin:0 0;transform:rotate(-90deg) scaleX(1.0) translateY(-8.89px);">390</span>
<span class="t" style="left:12.70px;top:163.50px;font-size:10.5px;color:#f0f0f0;transform-origin:0 0;transform:rotate(-90deg) scaleX(1.0) translateY(-8.89px);">455</span>
<span class="t" style="left:12.70px;top:111.10px;font-size:10.5px;color:#f0f0f0;transform-origin:0 0;transform:rotate(-90deg) scaleX(1.0) translateY(-8.89px);">520</span>
<span class="t" style="left:12.70px;top:58.70px;font-size:10.5px;color:#f0f0f0;transform-origin:0 0;transform:rotate(-90deg) scaleX(1.0) translateY(-8.89px);">585</span>
<span class="t" style="left:12.70px;top:6.30px;font-size:10.5px;color:#f0f0f0;transform-origin:0 0;transform:rotate(-90deg) scaleX(1.0) translateY(-8.89px);">650</span>
</div>
<div style="left:80.5px;top:764.3px;width:69px;height:15.6px;background:#6a6a6a;"></div>
<span class="t" style="left:88.55px;top:766.37px;font-size:12.2px;color:#f0f0f0;transform:scaleX(0.8285);">56.85%</span>
<div style="left:152px;top:764.3px;width:59.8px;height:15.6px;background:#6a6a6a;"></div>
<span class="t" style="left:160.45px;top:766.37px;font-size:12.2px;color:#f0f0f0;transform:scaleX(0.7554);">0°</span>
<div style="left:246px;top:764.3px;width:55.4px;height:15.6px;background:#6a6a6a;"></div>
<span class="t" style="left:255.65px;top:766.37px;font-size:12.2px;color:#f0f0f0;transform:scaleX(0.5882);">1</span>
<div style="left:335.8px;top:764.3px;width:180px;height:15.6px;background:#6a6a6a;"></div>
<span class="t" style="left:342.85px;top:766.37px;font-size:12.2px;color:#f0f0f0;transform:scaleX(0.9544);">No Selection</span>
<svg style="left:132.9px;top:766px;" width="14" height="13" viewBox="0 0 14 13"><path d="M1.6 3.5 L7 9.2 L12.4 3.5" stroke="#f0f0f0" stroke-width="1.4" fill="none"/></svg>
<svg style="left:194.6px;top:766px;" width="14" height="13" viewBox="0 0 14 13"><path d="M1.6 3.5 L7 9.2 L12.4 3.5" stroke="#f0f0f0" stroke-width="1.4" fill="none"/></svg>
<svg style="left:284.4px;top:766px;" width="14" height="13" viewBox="0 0 14 13"><path d="M1.6 3.5 L7 9.2 L12.4 3.5" stroke="#f0f0f0" stroke-width="1.4" fill="none"/></svg>
<svg style="left:498.5px;top:766px;" width="14" height="13" viewBox="0 0 14 13"><path d="M1.6 3.5 L7 9.2 L12.4 3.5" stroke="#f0f0f0" stroke-width="1.4" fill="none"/></svg>
<svg style="left:216px;top:766px;" width="120" height="13" viewBox="0 0 120 13"><g fill="#f4f4f4"><rect x="1" y="1.5" width="1.8" height="10"/><path d="M10.6 1.5 V11.5 L3.6 6.5 Z"/><path d="M26 1.5 V11.5 L18.6 6.5 Z"/><path d="M89.4 1.5 V11.5 L96.8 6.5 Z"/><path d="M104.6 1.5 V11.5 L111.6 6.5 Z"/><rect x="112.4" y="1.5" width="1.8" height="10"/></g></svg>
<div style="left:519px;top:766px;width:14px;height:12.5px;background:#8a8a8a;border-radius:1.5px;"></div>
<svg style="left:519px;top:766px;" width="14" height="12.5" viewBox="0 0 14 12.5"><path d="M3.2 2.8 H10.8 M7 4.5 V8 M4 7 L7 10.3 L10 7 Z" stroke="#2a2a2a" stroke-width="1.4" fill="#2a2a2a"/></svg>
<div style="left:838px;top:111px;width:320.20000000000005px;height:670.8px;background:#424242;border-left:1px solid #5a5a5a;border-right:1px solid #5a5a5a;box-sizing:border-box;"></div>
<div style="left:838px;top:111px;width:320.20000000000005px;height:1px;background:#5a5a5a;"></div>
<div style="left:839px;top:112px;width:318.20000000000005px;height:23.80000000000001px;background:#383838;"></div>
<div style="left:839px;top:135.8px;width:318.20000000000005px;height:1px;background:#5a5a5a;"></div>
<div style="left:881px;top:114.2px;width:53.200000000000045px;height:22.60000000000001px;background:#424242;border-left:1px solid #5a5a5a;border-right:1px solid #5a5a5a;border-top:1px solid #5a5a5a;box-sizing:border-box;"></div>
<svg style="left:843px;top:118.7px;" width="13" height="13" viewBox="0 0 13 13"><circle cx="6.3" cy="6.3" r="6" fill="#8c8c8c"/><path d="M3.6 3.6 L9 9 M9 3.6 L3.6 9" stroke="#222" stroke-width="1.3"/></svg>
<svg style="left:858px;top:120px;" width="8" height="11" viewBox="0 0 8 11"><path d="M0.6 0.8 L3.2 5.3 L0.6 9.8 M4 0.8 L6.6 5.3 L4 9.8" stroke="#e0e0e0" stroke-width="1.1" fill="none"/></svg>
<div style="left:871.3px;top:118px;width:1.6px;height:14px;background:#6c6c6c;"></div>
<div style="left:875.3px;top:118px;width:1.6px;height:14px;background:#6c6c6c;"></div>
<svg style="left:885.5px;top:120.5px;" width="8" height="10" viewBox="0 0 8 10"><path d="M1 3.6 L3.6 0.9 L6.2 3.6 M1 6 L3.6 8.7 L6.2 6" stroke="#f0f0f0" stroke-width="1.2" fill="none"/></svg>
<span class="t" style="left:896.45px;top:119.44px;font-size:12px;color:#f0f0f0;transform:scaleX(0.9930);">Color</span>
<svg style="left:1135.6px;top:118.4px;" width="14" height="13" viewBox="0 0 14 13"><path d="M0 1 H12.8 M0 4.7 H12.8 M0 8.4 H12.8 M0 12.1 H12.8" stroke="#e0e0e0" stroke-width="1.1" fill="none"/></svg>
<div style="left:866px;top:152px;width:28.8px;height:28.8px;background:#ffffff;"></div>
<div style="left:873.8px;top:160px;width:13.2px;height:12.8px;background:#424242;"></div>
<svg style="left:886px;top:153.5px;" width="8" height="8" viewBox="0 0 8 8"><path d="M1.4 6.2 L5.6 1.6" stroke="#ff2020" stroke-width="1.2"/></svg>
<div style="left:849.5px;top:168.4px;width:29.2px;height:28.8px;background:#d6d6d6;border:1px solid #e8e8e8;box-sizing:border-box;"></div>
<svg style="left:850px;top:152.4px;" width="14" height="14" viewBox="0 0 14 14"><path d="M3 12 V8 Q3 3.5 8 3.5 H10" stroke="#f0f0f0" stroke-width="1.4" fill="none"/><path d="M9.5 0.8 L13 3.5 L9.5 6.2 Z M0.4 9 L3 12.8 L5.6 9 Z" fill="#f0f0f0"/></svg>
<span class="t" style="left:903.17px;top:157.44px;font-size:12px;color:#f0f0f0;transform:scaleX(0.9200);">R</span>
<div style="left:920.2px;top:159.79999999999998px;width:181px;height:6.8px;background:linear-gradient(90deg,#00cccc,#ffcccc);"></div>
<svg style="left:1053.4px;top:155.2px;" width="16" height="16" viewBox="0 0 16 16"><circle cx="8" cy="8" r="7.4" fill="#f4f4f4"/><circle cx="8" cy="8" r="6.3" fill="#111"/><circle cx="8" cy="8" r="5" fill="#c6c6c6"/></svg>
<div style="left:1104.7px;top:152.0px;width:42.5px;height:22px;background:#2e2e2e;"></div>
<span class="t" style="left:1109.45px;top:157.64px;font-size:12px;color:#f0f0f0;transform:scaleX(0.9600);">204</span>
<span class="t" style="left:902.85px;top:183.44px;font-size:12px;color:#f0f0f0;transform:scaleX(0.9200);">G</span>
<div style="left:920.2px;top:185.79999999999998px;width:181px;height:6.8px;background:linear-gradient(90deg,#cc00cc,#ccffcc);"></div>
<svg style="left:1053.4px;top:181.2px;" width="16" height="16" viewBox="0 0 16 16"><circle cx="8" cy="8" r="7.4" fill="#f4f4f4"/><circle cx="8" cy="8" r="6.3" fill="#111"/><circle cx="8" cy="8" r="5" fill="#c6c6c6"/></svg>
<div style="left:1104.7px;top:178.0px;width:42.5px;height:22px;background:#2e2e2e;"></div>
<span class="t" style="left:1109.45px;top:183.64px;font-size:12px;color:#f0f0f0;transform:scaleX(0.9600);">204</span>
<span class="t" style="left:903.47px;top:209.44px;font-size:12px;color:#f0f0f0;transform:scaleX(0.9200);">B</span>
<div style="left:920.2px;top:211.79999999999998px;width:181px;height:6.8px;background:linear-gradient(90deg,#cccc00,#ccccff);"></div>
<svg style="left:1053.4px;top:207.2px;" width="16" height="16" viewBox="0 0 16 16"><circle cx="8" cy="8" r="7.4" fill="#f4f4f4"/><circle cx="8" cy="8" r="6.3" fill="#111"/><circle cx="8" cy="8" r="5" fill="#c6c6c6"/></svg>
<div style="left:1104.7px;top:204.0px;width:42.5px;height:22px;background:#2e2e2e;"></div>
<span class="t" style="left:1109.45px;top:209.64px;font-size:12px;color:#f0f0f0;transform:scaleX(0.9600);">204</span>
<svg style="left:849.5px;top:236.5px;" width="19" height="19" viewBox="0 0 19 19"><circle cx="9.3" cy="9.3" r="8.7" stroke="#d8d8d8" stroke-width="1.1" fill="#585858"/><path d="M4.6 14 L5.2 11.6 L10.4 6.4 L12.2 8.2 L7 13.4 Z" stroke="#e0e0e0" stroke-width="1" fill="none"/><path d="M10.2 5.2 L13.4 8.4 M11.4 6.6 L13 4.6 Q14.4 3.6 15 4.6 Q15.6 5.6 14.4 6.4 L12.6 7.8" stroke="#e0e0e0" stroke-width="1.4" fill="#e0e0e0"/></svg>
<svg style="left:871.8px;top:236.5px;" width="19" height="19" viewBox="0 0 19 19"><circle cx="9.3" cy="9.3" r="8.7" stroke="#8a8a8a" stroke-width="1.1" fill="none"/></svg>
<div style="left:899.3px;top:236.2px;width:24.3px;height:19.4px;background:#ffffff;"></div>
<svg style="left:899.4px;top:236.6px;" width="24.2" height="18.6" viewBox="0 0 24.2 18.6"><path d="M3.6 15.4 L20.6 3.2" stroke="#ff2020" stroke-width="1.3"/></svg>
<div style="left:924.6px;top:236.2px;width:24px;height:19.4px;background:#000000;border:1px solid #8a8a8a;box-sizing:border-box;"></div>
<div style="left:949.6px;top:236.2px;width:24.3px;height:19.4px;background:#ffffff;"></div>
<span class="t" style="left:1054.45px;top:240.24px;font-size:12px;color:#f0f0f0;transform:scaleX(1.0226);">#</span>
<div style="left:1067px;top:236px;width:80.2px;height:19.8px;background:#2e2e2e;"></div>
<span class="t" style="left:1071.65px;top:240.24px;font-size:12px;color:#f0f0f0;transform:scaleX(0.8038);">CCCCCC</span>
<svg style="left:976.2px;top:268px;" width="44" height="44" viewBox="-22 -22 44 44"><path d="M0.00 -20.40 A20.4 20.4 0 0 1 3.06 -20.17 L2.56 -16.91 A17.1 17.1 0 0 0 0.00 -17.10 Z" fill="#8fff00"/><path d="M2.66 -20.23 A20.4 20.4 0 0 1 5.67 -19.60 L4.75 -16.43 A17.1 17.1 0 0 0 2.23 -16.95 Z" fill="#afff00"/><path d="M5.28 -19.70 A20.4 20.4 0 0 1 8.18 -18.69 L6.85 -15.67 A17.1 17.1 0 0 0 4.43 -16.52 Z" fill="#cfff00"/><path d="M7.81 -18.85 A20.4 20.4 0 0 1 10.54 -17.46 L8.84 -14.64 A17.1 17.1 0 0 0 6.54 -15.80 Z" fill="#efff00"/><path d="M10.20 -17.67 A20.4 20.4 0 0 1 12.73 -15.94 L10.67 -13.36 A17.1 17.1 0 0 0 8.55 -14.81 Z" fill="#ffef00"/><path d="M12.42 -16.18 A20.4 20.4 0 0 1 14.71 -14.14 L12.33 -11.85 A17.1 17.1 0 0 0 10.41 -13.57 Z" fill="#ffcf00"/><path d="M14.42 -14.42 A20.4 20.4 0 0 1 16.43 -12.10 L13.77 -10.14 A17.1 17.1 0 0 0 12.09 -12.09 Z" fill="#ffaf00"/><path d="M16.18 -12.42 A20.4 20.4 0 0 1 17.86 -9.85 L14.97 -8.26 A17.1 17.1 0 0 0 13.57 -10.41 Z" fill="#ff8f00"/><path d="M17.67 -10.20 A20.4 20.4 0 0 1 19.00 -7.44 L15.92 -6.23 A17.1 17.1 0 0 0 14.81 -8.55 Z" fill="#ff6f00"/><path d="M18.85 -7.81 A20.4 20.4 0 0 1 19.80 -4.89 L16.60 -4.10 A17.1 17.1 0 0 0 15.80 -6.54 Z" fill="#ff4f00"/><path d="M19.70 -5.28 A20.4 20.4 0 0 1 20.27 -2.27 L16.99 -1.90 A17.1 17.1 0 0 0 16.52 -4.43 Z" fill="#ff2f00"/><path d="M20.23 -2.66 A20.4 20.4 0 0 1 20.40 0.40 L17.10 0.34 A17.1 17.1 0 0 0 16.95 -2.23 Z" fill="#ff0f00"/><path d="M20.40 -0.00 A20.4 20.4 0 0 1 20.17 3.06 L16.91 2.56 A17.1 17.1 0 0 0 17.10 -0.00 Z" fill="#ff000f"/><path d="M20.23 2.66 A20.4 20.4 0 0 1 19.60 5.67 L16.43 4.75 A17.1 17.1 0 0 0 16.95 2.23 Z" fill="#ff002f"/><path d="M19.70 5.28 A20.4 20.4 0 0 1 18.69 8.18 L15.67 6.85 A17.1 17.1 0 0 0 16.52 4.43 Z" fill="#ff004f"/><path d="M18.85 7.81 A20.4 20.4 0 0 1 17.46 10.54 L14.64 8.84 A17.1 17.1 0 0 0 15.80 6.54 Z" fill="#ff006f"/><path d="M17.67 10.20 A20.4 20.4 0 0 1 15.94 12.73 L13.36 10.67 A17.1 17.1 0 0 0 14.81 8.55 Z" fill="#ff008f"/><path d="M16.18 12.42 A20.4 20.4 0 0 1 14.14 14.71 L11.85 12.33 A17.1 17.1 0 0 0 13.57 10.41 Z" fill="#ff00af"/><path d="M14.42 14.42 A20.4 20.4 0 0 1 12.10 16.43 L10.14 13.77 A17.1 17.1 0 0 0 12.09 12.09 Z" fill="#ff00cf"/><path d="M12.42 16.18 A20.4 20.4 0 0 1 9.85 17.86 L8.26 14.97 A17.1 17.1 0 0 0 10.41 13.57 Z" fill="#ff00ef"/><path d="M10.20 17.67 A20.4 20.4 0 0 1 7.44 19.00 L6.23 15.92 A17.1 17.1 0 0 0 8.55 14.81 Z" fill="#ef00ff"/><path d="M7.81 18.85 A20.4 20.4 0 0 1 4.89 19.80 L4.10 16.60 A17.1 17.1 0 0 0 6.54 15.80 Z" fill="#cf00ff"/><path d="M5.28 19.70 A20.4 20.4 0 0 1 2.27 20.27 L1.90 16.99 A17.1 17.1 0 0 0 4.43 16.52 Z" fill="#af00ff"/><path d="M2.66 20.23 A20.4 20.4 0 0 1 -0.40 20.40 L-0.34 17.10 A17.1 17.1 0 0 0 2.23 16.95 Z" fill="#8f00ff"/><path d="M0.00 20.40 A20.4 20.4 0 0 1 -3.06 20.17 L-2.56 16.91 A17.1 17.1 0 0 0 0.00 17.10 Z" fill="#6f00ff"/><path d="M-2.66 20.23 A20.4 20.4 0 0 1 -5.67 19.60 L-4.75 16.43 A17.1 17.1 0 0 0 -2.23 16.95 Z" fill="#4f00ff"/><path d="M-5.28 19.70 A20.4 20.4 0 0 1 -8.18 18.69 L-6.85 15.67 A17.1 17.1 0 0 0 -4.43 16.52 Z" fill="#2f00ff"/><path d="M-7.81 18.85 A20.4 20.4 0 0 1 -10.54 17.46 L-8.84 14.64 A17.1 17.1 0 0 0 -6.54 15.80 Z" fill="#0f00ff"/><path d="M-10.20 17.67 A20.4 20.4 0 0 1 -12.73 15.94 L-10.67 13.36 A17.1 17.1 0 0 0 -8.55 14.81 Z" fill="#000fff"/><path d="M-12.42 16.18 A20.4 20.4 0 0 1 -14.71 14.14 L-12.33 11.85 A17.1 17.1 0 0 0 -10.41 13.57 Z" fill="#002fff"/><path d="M-14.42 14.42 A20.4 20.4 0 0 1 -16.43 12.10 L-13.77 10.14 A17.1 17.1 0 0 0 -12.09 12.09 Z" fill="#004fff"/><path d="M-16.18 12.42 A20.4 20.4 0 0 1 -17.86 9.85 L-14.97 8.26 A17.1 17.1 0 0 0 -13.57 10.41 Z" fill="#006fff"/><path d="M-17.67 10.20 A20.4 20.4 0 0 1 -19.00 7.44 L-15.92 6.23 A17.1 17.1 0 0 0 -14.81 8.55 Z" fill="#008fff"/><path d="M-18.85 7.81 A20.4 20.4 0 0 1 -19.80 4.89 L-16.60 4.10 A17.1 17.1 0 0 0 -15.80 6.54 Z" fill="#00afff"/><path d="M-19.70 5.28 A20.4 20.4 0 0 1 -20.27 2.27 L-16.99 1.90 A17.1 17.1 0 0 0 -16.52 4.43 Z" fill="#00cfff"/><path d="M-20.23 2.66 A20.4 20.4 0 0 1 -20.40 -0.40 L-17.10 -0.34 A17.1 17.1 0 0 0 -16.95 2.23 Z" fill="#00efff"/><path d="M-20.40 0.00 A20.4 20.4 0 0 1 -20.17 -3.06 L-16.91 -2.56 A17.1 17.1 0 0 0 -17.10 0.00 Z" fill="#00ffef"/><path d="M-20.23 -2.66 A20.4 20.4 0 0 1 -19.60 -5.67 L-16.43 -4.75 A17.1 17.1 0 0 0 -16.95 -2.23 Z" fill="#00ffcf"/><path d="M-19.70 -5.28 A20.4 20.4 0 0 1 -18.69 -8.18 L-15.67 -6.85 A17.1 17.1 0 0 0 -16.52 -4.43 Z" fill="#00ffaf"/><path d="M-18.85 -7.81 A20.4 20.4 0 0 1 -17.46 -10.54 L-14.64 -8.84 A17.1 17.1 0 0 0 -15.80 -6.54 Z" fill="#00ff8f"/><path d="M-17.67 -10.20 A20.4 20.4 0 0 1 -15.94 -12.73 L-13.36 -10.67 A17.1 17.1 0 0 0 -14.81 -8.55 Z" fill="#00ff6f"/><path d="M-16.18 -12.42 A20.4 20.4 0 0 1 -14.14 -14.71 L-11.85 -12.33 A17.1 17.1 0 0 0 -13.57 -10.41 Z" fill="#00ff4f"/><path d="M-14.42 -14.42 A20.4 20.4 0 0 1 -12.10 -16.43 L-10.14 -13.77 A17.1 17.1 0 0 0 -12.09 -12.09 Z" fill="#00ff2f"/><path d="M-12.42 -16.18 A20.4 20.4 0 0 1 -9.85 -17.86 L-8.26 -14.97 A17.1 17.1 0 0 0 -10.41 -13.57 Z" fill="#00ff0f"/><path d="M-10.20 -17.67 A20.4 20.4 0 0 1 -7.44 -19.00 L-6.23 -15.92 A17.1 17.1 0 0 0 -8.55 -14.81 Z" fill="#0fff00"/><path d="M-7.81 -18.85 A20.4 20.4 0 0 1 -4.89 -19.80 L-4.10 -16.60 A17.1 17.1 0 0 0 -6.54 -15.80 Z" fill="#2fff00"/><path d="M-5.28 -19.70 A20.4 20.4 0 0 1 -2.27 -20.27 L-1.90 -16.99 A17.1 17.1 0 0 0 -4.43 -16.52 Z" fill="#4fff00"/><path d="M-2.66 -20.23 A20.4 20.4 0 0 1 0.40 -20.40 L0.34 -17.10 A17.1 17.1 0 0 0 -2.23 -16.95 Z" fill="#6fff00"/><defs><linearGradient id="sq1" x1="0" x2="1" y1="0" y2="0"><stop offset="0" stop-color="#fff"/><stop offset="1" stop-color="#f00"/></linearGradient><linearGradient id="sq2" x1="0" x2="0" y1="0" y2="1"><stop offset="0" stop-color="#000" stop-opacity="0"/><stop offset="1" stop-color="#000"/></linearGradient></defs><rect x="-5" y="-5.2" width="11" height="10.6" fill="url(#sq1)"/><rect x="-5" y="-5.2" width="11" height="10.6" fill="url(#sq2)"/><rect x="-9.6" y="-6.6" width="7.4" height="6.6" rx="0.8" fill="#3a3a3a" stroke="#e8e8e8" stroke-width="0.9"/><rect x="-6.8" y="-5.2" width="1.9" height="3.8" fill="#e8e8e8"/><rect x="14.4" y="-3" width="7.2" height="7.2" fill="#555" stroke="#b0b0b0" stroke-width="0.9" stroke-dasharray="1.4 0.9"/><rect x="16.3" y="-1.6" width="3.6" height="4.4" fill="#ff2a00"/></svg>
<span class="t" style="left:858.65px;top:326.84px;font-size:12px;color:#f0f0f0;transform:scaleX(0.9779);">Opacity</span>
<div style="left:906px;top:330.6px;width:178px;height:4.4px;background:#7c7c7c;border-radius:2px;"></div>
<svg style="left:1078.6px;top:325.6px;" width="14" height="14" viewBox="0 0 14 14"><circle cx="7" cy="7" r="6.6" fill="#cacaca"/></svg>
<div style="left:1094.8px;top:322.2px;width:52.4px;height:19.6px;background:#2e2e2e;"></div>
<span class="t" style="left:1099.45px;top:326.64px;font-size:12px;color:#f0f0f0;transform:scaleX(0.9251);">100%</span>
<div style="left:838px;top:349.5px;width:320.20000000000005px;height:1px;background:#5a5a5a;"></div>
<div style="left:839px;top:353.8px;width:318.20000000000005px;height:24.2px;background:#383838;"></div>
<div style="left:839px;top:378px;width:318.20000000000005px;height:1px;background:#5a5a5a;"></div>
<div style="left:842px;top:356.2px;width:57.700000000000045px;height:22.80000000000001px;background:#424242;border-left:1px solid #5a5a5a;border-right:1px solid #5a5a5a;border-top:1px solid #5a5a5a;box-sizing:border-box;"></div>
<span class="t" style="left:857.55px;top:361.24px;font-size:12px;color:#f0f0f0;transform:scaleX(0.9000);">Layers</span>
<svg style="left:1135.6px;top:360.6px;" width="14" height="13" viewBox="0 0 14 13"><path d="M0 1 H12.8 M0 4.7 H12.8 M0 8.4 H12.8 M0 12.1 H12.8" stroke="#e0e0e0" stroke-width="1.1" fill="none"/></svg>
<svg style="left:848.8px;top:393.5px;" width="15" height="13" viewBox="0 0 15 13"><path d="M0.7 6.3 Q3.6 1.5 7.2 1.5 Q10.8 1.5 13.7 6.3 Q10.8 11.1 7.2 11.1 Q3.6 11.1 0.7 6.3 Z" stroke="#b8b8b8" stroke-width="1.1" fill="none" stroke-linejoin="round"/><circle cx="7.2" cy="6.3" r="2.3" stroke="#b8b8b8" stroke-width="1.1" fill="none"/><circle cx="7.2" cy="6.3" r="0.7" fill="#b8b8b8"/></svg>
<svg style="left:870.8px;top:392.6px;" width="15" height="15" viewBox="0 0 15 15"><path d="M1.2 7.4 V4.2 Q1.2 0.9 4 0.9 Q6.8 0.9 6.8 4.2 V7" stroke="#9a9a9a" stroke-width="1.3" fill="none"/><rect x="5.6" y="6.8" width="8" height="6.6" rx="1" stroke="#9a9a9a" stroke-width="1.3" fill="none"/></svg>
<div style="left:896.2px;top:389.5px;width:13px;height:20px;background:#000;border:1px solid #6c6c6c;box-sizing:border-box;border-radius:1px;"></div>
<svg style="left:916px;top:394px;" width="10" height="10" viewBox="0 0 10 10"><path d="M0.4 0.3 L9.4 4.6 L0.4 8.9 Z" fill="#b6b6b6"/></svg>
<svg style="left:934.2px;top:389.5px;overflow:hidden;" width="20" height="19.8" viewBox="0 0 20 19.8"><clipPath id="ck934"><rect x="0" y="0" width="20" height="19.8"/></clipPath><g clip-path="url(#ck934)" shape-rendering="crispEdges"><rect x="-1.70" y="-1.70" width="6.72" height="6.65" fill="#dcdcdc"/><rect x="-1.70" y="4.90" width="6.72" height="6.65" fill="#f4f4f4"/><rect x="-1.70" y="11.50" width="6.72" height="6.65" fill="#dcdcdc"/><rect x="-1.70" y="18.10" width="6.72" height="6.65" fill="#f4f4f4"/><rect x="4.97" y="-1.70" width="6.72" height="6.65" fill="#f4f4f4"/><rect x="4.97" y="4.90" width="6.72" height="6.65" fill="#dcdcdc"/><rect x="4.97" y="11.50" width="6.72" height="6.65" fill="#f4f4f4"/><rect x="4.97" y="18.10" width="6.72" height="6.65" fill="#dcdcdc"/><rect x="11.63" y="-1.70" width="6.72" height="6.65" fill="#dcdcdc"/><rect x="11.63" y="4.90" width="6.72" height="6.65" fill="#f4f4f4"/><rect x="11.63" y="11.50" width="6.72" height="6.65" fill="#dcdcdc"/><rect x="11.63" y="18.10" width="6.72" height="6.65" fill="#f4f4f4"/><rect x="18.30" y="-1.70" width="6.72" height="6.65" fill="#f4f4f4"/><rect x="18.30" y="4.90" width="6.72" height="6.65" fill="#dcdcdc"/><rect x="18.30" y="11.50" width="6.72" height="6.65" fill="#f4f4f4"/><rect x="18.30" y="18.10" width="6.72" height="6.65" fill="#dcdcdc"/></g></svg>
<span class="t" style="left:957.85px;top:393.04px;font-size:12px;color:#f0f0f0;transform:scaleX(0.9089);">Layer 1</span>
<svg style="left:1113.6px;top:392.4px;" width="15" height="15" viewBox="0 0 15 15"><circle cx="7.4" cy="7.4" r="6.3" stroke="#f0f0f0" stroke-width="1.3" fill="none"/></svg>
<div style="left:1138.2px;top:380px;width:9.2px;height:130.5px;background:#8c8c8c;border-radius:4.5px;"></div>
<div style="left:847px;top:516.6px;width:301.5px;height:1.2px;background:#343434;"></div>
<div style="left:847px;top:523.5px;width:301.6px;height:19.2px;background:#2d2d2d;border-radius:5px;"></div>
<svg style="left:853.5px;top:525px;" width="16" height="16" viewBox="0 0 16 16"><circle cx="9" cy="6" r="4.6" stroke="#e8e8e8" stroke-width="1.5" fill="none"/><path d="M5.6 9.6 L1.2 14.2" stroke="#e8e8e8" stroke-width="2.2" stroke-linecap="round"/></svg>
<span class="t" style="left:871.45px;top:527.84px;font-size:12px;color:#9c9c9c;transform:scaleX(0.9105);">Search</span>
<svg style="left:1127.4px;top:525.2px;" width="15" height="15" viewBox="0 0 15 15"><circle cx="7.4" cy="7.4" r="6.5" stroke="#f0f0f0" stroke-width="1.2" fill="none"/><path d="M4.8 4.8 L10 10 M10 4.8 L4.8 10" stroke="#f0f0f0" stroke-width="1.3"/></svg>
<div style="left:838px;top:586px;width:320.20000000000005px;height:1px;background:#5a5a5a;"></div>
<div style="left:839px;top:590.8px;width:318.20000000000005px;height:24.2px;background:#383838;"></div>
<div style="left:839px;top:615px;width:318.20000000000005px;height:1px;background:#5a5a5a;"></div>
<div style="left:842.4px;top:593.3px;width:88.0px;height:22.700000000000045px;background:#424242;border-left:1px solid #5a5a5a;border-right:1px solid #5a5a5a;border-top:1px solid #5a5a5a;box-sizing:border-box;"></div>
<span class="t" style="left:857.05px;top:597.84px;font-size:12px;color:#f0f0f0;transform:scaleX(0.9753);">Appearance</span>
<span class="t" style="left:944.45px;top:597.84px;font-size:12px;color:#9c9c9c;transform:scaleX(0.9465);">Transparency</span>
<svg style="left:1135.6px;top:597.8px;" width="14" height="13" viewBox="0 0 14 13"><path d="M0 1 H12.8 M0 4.7 H12.8 M0 8.4 H12.8 M0 12.1 H12.8" stroke="#e0e0e0" stroke-width="1.1" fill="none"/></svg>
<span class="t" style="left:878.45px;top:630.04px;font-size:12px;color:#f0f0f0;transform:scaleX(0.9251);">Fill</span>
<span class="t" style="left:878.45px;top:658.44px;font-size:12px;color:#f0f0f0;transform:scaleX(0.9877);">Opacity</span>
<div style="left:1067.2px;top:629.5px;width:14px;height:14px;background:#d0d0d0;border:1px solid #efefef;box-sizing:border-box;"></div>
<svg style="left:1067.2px;top:629.5px;" width="14" height="14" viewBox="0 0 14 14"><circle cx="7" cy="7" r="4.6" fill="#222"/></svg>
<div style="left:1086.7px;top:624.9px;width:24.5px;height:23.2px;background:#707070;"></div>
<div style="left:1089.4px;top:627.6px;width:19.2px;height:18px;background:#d6d6d6;"></div>
<svg style="left:1102px;top:639px;" width="6.6" height="6.6" viewBox="0 0 6.6 6.6"><path d="M6.6 0 V6.6 H0 Z" fill="#c2c2c2"/></svg>
<svg style="left:1116.6px;top:629.8px;" width="15" height="13" viewBox="0 0 15 13"><path d="M0.7 6.3 Q3.6 1.5 7.2 1.5 Q10.8 1.5 13.7 6.3 Q10.8 11.1 7.2 11.1 Q3.6 11.1 0.7 6.3 Z" stroke="#f4f4f4" stroke-width="1.3" fill="none" stroke-linejoin="round"/><circle cx="7.2" cy="6.3" r="2.3" stroke="#f4f4f4" stroke-width="1.2" fill="none"/><circle cx="7.2" cy="6.3" r="0.7" fill="#f4f4f4"/></svg>
<div style="left:1002.7px;top:654.3px;width:65.4px;height:19.6px;background:#2e2e2e;"></div>
<span class="t" style="left:1007.25px;top:658.64px;font-size:12px;color:#f0f0f0;transform:scaleX(0.9023);">100%</span>
<div style="left:1068.1px;top:654.3px;width:13.2px;height:19.6px;background:#5a5a5a;"></div>
<svg style="left:1068.1px;top:654.3px;" width="13.2" height="19.6" viewBox="0 0 13.2 19.6"><path d="M3.2 7.6 L6.6 3.8 L10 7.6 M3.2 12 L6.6 15.8 L10 12" stroke="#f0f0f0" stroke-width="1.3" fill="none"/></svg>
<svg style="left:1089px;top:654.3px;overflow:hidden;" width="20" height="19.6" viewBox="0 0 20 19.6"><clipPath id="ck1089"><rect x="0" y="0" width="20" height="19.6"/></clipPath><g clip-path="url(#ck1089)" shape-rendering="crispEdges"><rect x="-2.60" y="-2.60" width="6.72" height="6.58" fill="#dcdcdc"/><rect x="-2.60" y="3.93" width="6.72" height="6.58" fill="#f4f4f4"/><rect x="-2.60" y="10.47" width="6.72" height="6.58" fill="#dcdcdc"/><rect x="-2.60" y="17.00" width="6.72" height="6.58" fill="#f4f4f4"/><rect x="4.07" y="-2.60" width="6.72" height="6.58" fill="#f4f4f4"/><rect x="4.07" y="3.93" width="6.72" height="6.58" fill="#dcdcdc"/><rect x="4.07" y="10.47" width="6.72" height="6.58" fill="#f4f4f4"/><rect x="4.07" y="17.00" width="6.72" height="6.58" fill="#dcdcdc"/><rect x="10.73" y="-2.60" width="6.72" height="6.58" fill="#dcdcdc"/><rect x="10.73" y="3.93" width="6.72" height="6.58" fill="#f4f4f4"/><rect x="10.73" y="10.47" width="6.72" height="6.58" fill="#dcdcdc"/><rect x="10.73" y="17.00" width="6.72" height="6.58" fill="#f4f4f4"/><rect x="17.40" y="-2.60" width="6.72" height="6.58" fill="#f4f4f4"/><rect x="17.40" y="3.93" width="6.72" height="6.58" fill="#dcdcdc"/><rect x="17.40" y="10.47" width="6.72" height="6.58" fill="#f4f4f4"/><rect x="17.40" y="17.00" width="6.72" height="6.58" fill="#dcdcdc"/></g></svg>
<svg style="left:1118.5px;top:659px;" width="11" height="11" viewBox="0 0 11 11"><circle cx="5.5" cy="5.5" r="4.7" stroke="#c8c8c8" stroke-width="1" fill="none"/></svg>
<div style="left:1138.2px;top:623.3px;width:9.2px;height:141px;background:#8c8c8c;border-radius:4.5px;"></div>
<div style="left:847px;top:775.4px;width:301.5px;height:1px;background:#565656;"></div>
<div style="left:1162px;top:111px;width:22.8px;height:669.8px;background:#424242;border-top:1px solid #555;box-sizing:border-box;"></div>
<svg style="left:1166px;top:121.2px;" width="15" height="6" viewBox="0 0 15 6"><rect x="0.0" y="0.0" width="2" height="2" fill="#d8d8d8"/><rect x="0.0" y="3.6" width="2" height="2" fill="#d8d8d8"/><rect x="4.1" y="0.0" width="2" height="2" fill="#d8d8d8"/><rect x="4.1" y="3.6" width="2" height="2" fill="#d8d8d8"/><rect x="8.2" y="0.0" width="2" height="2" fill="#d8d8d8"/><rect x="8.2" y="3.6" width="2" height="2" fill="#d8d8d8"/><rect x="12.3" y="0.0" width="2" height="2" fill="#d8d8d8"/><rect x="12.3" y="3.6" width="2" height="2" fill="#d8d8d8"/></svg>
<svg style="left:1165px;top:136px;" width="17" height="16" viewBox="0 0 17 16"><g stroke="#e4e4e4" stroke-width="1.4" fill="none"><circle cx="3" cy="4" r="2.1"/><circle cx="3" cy="12.4" r="2.1"/><path d="M7.6 2.4 H16 M7.6 5.6 H16 M7.6 10.8 H16 M7.6 14 H16"/></g></svg>
<div style="left:1163.6px;top:154.6px;width:19.0px;height:18.316px;background:#ffffff;"></div>
<svg style="left:1163.6px;top:154.6px;" width="19.0" height="18" viewBox="0 0 19.0 18"><path d="M3.4 15.6 L16 2.8" stroke="#ff2020" stroke-width="1.3"/></svg>
<div style="left:1163.6px;top:172.61599999999999px;width:19.0px;height:18.316px;background:#ffffff;"></div>
<svg style="left:1163.6px;top:172.61599999999999px;" width="19.0" height="18" viewBox="0 0 19.0 18"><g stroke="#333" stroke-width="1.1" fill="none"><circle cx="9.8" cy="9" r="5.6"/><circle cx="9.8" cy="9" r="3.2"/><path d="M9.8 1.4 V5 M9.8 13 V16.6 M2.2 9 H5.8 M13.8 9 H17.4"/></g></svg>
<div style="left:1163.6px;top:190.632px;width:19.0px;height:18.316px;background:#000000;"></div>
<div style="left:1163.6px;top:208.648px;width:19.0px;height:18.316px;background:#ffffff;"></div>
<div style="left:1163.6px;top:226.664px;width:19.0px;height:18.316px;background:#00ffff;"></div>
<div style="left:1163.6px;top:244.67999999999998px;width:19.0px;height:18.316px;background:#ff33ff;"></div>
<div style="left:1163.6px;top:262.69599999999997px;width:19.0px;height:18.316px;background:#ffff33;"></div>
<div style="left:1163.6px;top:280.712px;width:19.0px;height:18.316px;background:#ff2a00;"></div>
<div style="left:1163.6px;top:298.72799999999995px;width:19.0px;height:18.316px;background:#00ee33;"></div>
<div style="left:1163.6px;top:316.74399999999997px;width:19.0px;height:18.316px;background:#1c28ee;"></div>
<div style="left:1163.6px;top:334.76px;width:19.0px;height:18.316px;background:#ffffff;"></div>
<div style="left:1163.6px;top:352.77599999999995px;width:19.0px;height:18.316px;background:#e8e8e8;"></div>
<div style="left:1163.6px;top:370.792px;width:19.0px;height:18.316px;background:#d1d1d1;"></div>
<div style="left:1163.6px;top:388.808px;width:19.0px;height:18.316px;background:#bababa;"></div>
<div style="left:1163.6px;top:406.82399999999996px;width:19.0px;height:18.316px;background:#a3a3a3;"></div>
<div style="left:1163.6px;top:424.8399999999999px;width:19.0px;height:18.316px;background:#8c8c8c;"></div>
<div style="left:1163.6px;top:442.856px;width:19.0px;height:18.316px;background:#757575;"></div>
<div style="left:1163.6px;top:460.87199999999996px;width:19.0px;height:18.316px;background:#5e5e5e;"></div>
<div style="left:1163.6px;top:478.8879999999999px;width:19.0px;height:18.316px;background:#444444;"></div>
<div style="left:1163.6px;top:496.904px;width:19.0px;height:18.316px;background:#212121;"></div>
<div style="left:1163.6px;top:514.92px;width:19.0px;height:18.316px;background:#000000;"></div>
<div style="left:1163.6px;top:532.9359999999999px;width:19.0px;height:18.316px;background:#0a0a8c;"></div>
<div style="left:1163.6px;top:550.952px;width:19.0px;height:18.316px;background:#00961e;"></div>
<div style="left:1163.6px;top:568.968px;width:19.0px;height:18.316px;background:#009696;"></div>
<div style="left:1163.6px;top:586.9839999999999px;width:19.0px;height:18.316px;background:#0096ff;"></div>
<div style="left:1163.6px;top:605.0px;width:19.0px;height:18.316px;background:#00ff96;"></div>
<div style="left:1163.6px;top:623.016px;width:19.0px;height:18.316px;background:#961400;"></div>
<div style="left:1163.6px;top:641.0319999999999px;width:19.0px;height:18.316px;background:#96149b;"></div>
<div style="left:1163.6px;top:659.048px;width:19.0px;height:18.316px;background:#9628ff;"></div>
<div style="left:1163.6px;top:677.064px;width:19.0px;height:18.316px;background:#969614;"></div>
<div style="left:1163.6px;top:695.0799999999999px;width:19.0px;height:18.316px;background:#9696ff;"></div>
<div style="left:1163.6px;top:713.096px;width:19.0px;height:18.316px;background:#3c9632;"></div>
<div style="left:1163.6px;top:731.112px;width:19.0px;height:18.316px;background:#50c878;"></div>
<div style="left:1163.6px;top:749.1279999999999px;width:19.0px;height:7.072000000000116px;background:#78ecf0;"></div>
<svg style="left:1164.6px;top:759.4px;" width="18" height="18" viewBox="0 0 18 18"><path d="M2.8 0.8 H14.6 Q16 0.8 16 2.2 V10 Q16 11.4 14.6 11.4 H10.4 L8.6 13.4 L6.8 11.4 H2.8 Q1.4 11.4 1.4 10 V2.2 Q1.4 0.8 2.8 0.8 Z" stroke="#e0e0e0" stroke-width="1" fill="none"/><path d="M3.8 4 H13.6 M3.8 6.2 H13.6 M3.8 8.4 H13.6" stroke="#d0d0d0" stroke-width="1.1"/></svg>
<svg style="left:0;top:0" width="1203" height="793" viewBox="0 0 1203 793"><path d="M39.4 50.8 H48.6 L52.6 54.8 V67.6 H39.4 Z M48.4 51 V55 H52.4" stroke="#f4f4f4" stroke-width="1.4" fill="none" stroke-linejoin="round"/><path d="M68.8 49.9 H76.4 L81 54.6 V66 Q81 68.1 79 68.1 H68.8 Q66.8 68.1 66.8 66 V52 Q66.8 49.9 68.8 49.9 Z M76.2 50.2 V54.8 H80.8" stroke="#f4f4f4" stroke-width="1.4" fill="none" stroke-linejoin="round"/><path d="M73.9 57 V65 M71 62.2 L73.9 65.2 L76.8 62.2" stroke="#f4f4f4" stroke-width="1.4" fill="none"/><path d="M101 53.6 H96 Q94 53.6 94 55.6 V64.6 Q94 66.6 96 66.6 H106 Q108 66.6 108 64.6 V60" stroke="#f4f4f4" stroke-width="2" fill="none"/><path d="M101.5 59.6 L110 51 M104.2 50.9 H110.2 V57" stroke="#f4f4f4" stroke-width="2" fill="none"/><path d="M127 52.4 H121.2 V64.4 H136.4 V60.6" stroke="#8c8c8c" stroke-width="1.3" fill="none"/><path d="M124.6 61.4 Q125.2 55 132.6 54.6 V51.4 L139 56 L132.6 60.6 V57.6 Q127.4 57.4 124.6 61.4 Z" fill="#8c8c8c"/><path d="M162.6 53.4 V52.4 Q162.6 51.6 161.8 51.6 H151 Q149.8 51.6 149.8 52.8 V64.8 Q149.8 66 151 66 H161.8 Q162.6 66 162.6 65.2 V62.6" stroke="#8c8c8c" stroke-width="1.3" fill="none"/><path d="M153 62.6 Q154.6 57.4 161.4 57.2 V54.6 L167.2 58.6 L161.4 62.6 V60.2 Q156 60 153 62.6 Z" stroke="#8c8c8c" stroke-width="1.2" fill="none" stroke-linejoin="round"/><path d="M182.8 58.2 L190.6 52.6 V56 Q200.6 56 201.8 65.6 Q198 60.6 190.6 61 V64.2 Z" stroke="#f4f4f4" stroke-width="1.3" fill="#6c6c6c" stroke-linejoin="round"/><path d="M229.2 58.2 L221.4 52.6 V56 Q211.4 56 210.2 65.6 Q214 60.6 221.4 61 V64.2 Z" stroke="#8c8c8c" stroke-width="1.2" fill="#585858" stroke-linejoin="round"/><path d="M241.6 60.4 V56.6 Q241.6 52.6 245.6 52.6 H254 M251.4 49.8 L254.6 52.6 L251.4 55.6 M255 57.6 V61.6 Q255 65.6 251 65.6 H242.8 M245.4 62.8 L242.2 65.6 L245.4 68.6" stroke="#f4f4f4" stroke-width="1.8" fill="none" stroke-linejoin="round" stroke-linecap="round"/><path d="M277.6 50 H281.4 V68 H272.8 Z" fill="#8c8c8c"/><path d="M283.2 50.4 H287 L291.6 67.6 H283.2 Z" stroke="#8c8c8c" stroke-width="1" fill="none"/><path d="M282.3 49.6 V68.6" stroke="#6a6a6a" stroke-width="0.8"/><path d="M301.4 49.6 L319 54 V57.8 H301.4 Z" fill="#8c8c8c"/><path d="M301.9 60 H318.6 V63.6 L301.9 68 Z" stroke="#8c8c8c" stroke-width="1" fill="none"/><path d="M301 58.9 H319.4" stroke="#6a6a6a" stroke-width="0.8"/><g stroke="#8c8c8c" stroke-width="1.2" fill="none"><rect x="339.6" y="51.6" width="7.8" height="12.8" rx="2.6"/><rect x="331.8" y="59.8" width="13" height="7.8" rx="2.6"/><path d="M337.8 50.8 Q331.4 51 330.4 57.4 M328.4 54.6 L330.4 57.8 L333.2 55"/></g><g stroke="#8c8c8c" stroke-width="1.2" fill="none"><rect x="363.6" y="55" width="5" height="7.8"/><path d="M362.8 50.8 H367.6" stroke-dasharray="1.4 1"/><path d="M368.6 50.8 Q372.6 51 372.6 55.4"/><path d="M364.4 67.2 H369.4" stroke-dasharray="1.4 1"/><path d="M363.4 67.2 Q359.6 67 359.6 62.4"/></g><path d="M370.2 54.4 H375 L372.6 57.8 Z M357.2 63.4 H362 L359.6 60 Z" fill="#8c8c8c"/><g stroke="#8c8c8c" stroke-width="1.2" fill="none"><rect x="384.8" y="51.6" width="7.8" height="12.8" rx="2.6"/><rect x="387.4" y="59.8" width="13" height="7.8" rx="2.6"/><path d="M394.6 50.8 Q401 51 402 57.4 M404 54.6 L402 57.8 L399.2 55"/></g><rect x="419.1" y="50.3" width="12" height="12" stroke="#8c8c8c" stroke-width="1.2" fill="#686868"/><circle cx="430.3" cy="62" r="6.2" stroke="#8c8c8c" stroke-width="1.2" fill="#686868" fill-opacity="0.7"/><path d="M446.8 50.3 H458.8 V55.6 A6.3 6.3 0 1 1 452.2 62.3 H446.8 Z" stroke="#8c8c8c" stroke-width="1.2" fill="#686868"/><rect x="475" y="50.1" width="12.2" height="12" fill="#585858"/><circle cx="486.4" cy="61.4" r="6.3" fill="#585858"/><path d="M480 62 A6.4 6.4 0 0 1 487.2 55 V62 Z" stroke="#a0a0a0" stroke-width="1.1" fill="#6a6a6a"/><rect x="502.9" y="50.2" width="11.4" height="11" stroke="#8c8c8c" stroke-width="1.1" fill="#686868"/><circle cx="512.4" cy="62.4" r="6.2" stroke="#767676" stroke-width="1" fill="#565656"/><circle cx="515.6" cy="56.8" r="6.4" stroke="#7c7c7c" stroke-width="1" fill="#555555"/><rect x="531" y="50.2" width="9.6" height="9.8" stroke="#8c8c8c" stroke-width="1.1" fill="#686868"/><circle cx="543.8" cy="62.6" r="5.4" stroke="#8c8c8c" stroke-width="1.1" fill="#686868"/><circle cx="539.6" cy="58.2" r="3.5" stroke="#9a9a9a" stroke-width="1.1" fill="#707070"/><rect x="559.6" y="50.9" width="11.8" height="11.4" stroke="#9a9a9a" stroke-width="1.1" fill="#6e6e6e"/><circle cx="571" cy="62" r="6.5" stroke="#9a9a9a" stroke-width="1.1" fill="#747474"/><rect x="587.1" y="50.3" width="12" height="12" stroke="#8c8c8c" stroke-width="1.2" fill="#5c5c5c"/><circle cx="598.7" cy="62" r="6.5" stroke="#8c8c8c" stroke-width="1.2" fill="#6c6c6c"/><rect x="615.8" y="55" width="11.4" height="11" stroke="#8c8c8c" stroke-width="1.2" fill="none"/><circle cx="626.2" cy="55.7" r="5.4" stroke="#8c8c8c" stroke-width="1.2" fill="none"/><path d="M633 62.8 V67.8 H628 Z" fill="#8c8c8c"/><g stroke="#8c8c8c" stroke-width="1.1" fill="none"><path d="M648.2 49.6 Q664 52 667.2 68.6"/><path d="M648.2 57.4 Q658 58.6 659.6 68.6"/><circle cx="654" cy="50.8" r="1.2" fill="#424242"/><circle cx="665.6" cy="61.6" r="1.2" fill="#424242"/><circle cx="652.4" cy="58.2" r="1.2" fill="#424242"/><circle cx="658.6" cy="64.6" r="1.2" fill="#424242"/></g><g stroke="#8c8c8c" stroke-width="1.3" fill="none"><path d="M681 50.6 V64.6 H694.2 M678 53.4 H692 V67.6"/><path d="M683.6 62 L689.4 56.2 M686.6 55.8 H689.8 V59 M683.2 59.2 V62.4 H686.4" stroke-width="1.1"/></g><g stroke="#8c8c8c" stroke-width="1.1" fill="none"><circle cx="714.1" cy="58.8" r="9.3"/><path d="M712.6 58.4 L710.2 60.8 Q708.8 62.8 710.6 64.2 Q712.4 65.4 714 63.8 L715.6 62.2 M715.6 59.2 L718 56.8 Q719.4 54.8 717.6 53.4 Q715.8 52.2 714.2 53.8 L712.6 55.4 M712.4 61 L715.8 57.6" stroke-width="1.3"/><path d="M708.4 56.2 H711 M711 53.4 V56.2 M717.2 61.4 H719.8 M717.2 61.4 V64.2" stroke-width="1"/></g><path d="M748.6 54.4 H742.8 Q741.2 54.4 741.2 56 V64.2 Q741.2 65.8 742.8 65.8 H751.6 Q753.2 65.8 753.2 64.2 V59" stroke="#8c8c8c" stroke-width="1.7" fill="none"/><path d="M755 52.4 L746 61.4 M745.6 56.4 V61.8 H751" stroke="#8c8c8c" stroke-width="1.7" fill="none"/><path d="M775.6 54.4 H770.6 Q769 54.4 769 56 V64.2 Q769 65.8 770.6 65.8 H779.4 Q781 65.8 781 64.2 V59.6" stroke="#8c8c8c" stroke-width="1.7" fill="none"/><path d="M774.6 60.6 L783 52.2 M777.8 52.2 H783.2 V57.6" stroke="#8c8c8c" stroke-width="1.7" fill="none"/><g stroke="#8c8c8c" stroke-width="1.1" fill="none"><circle cx="803.9" cy="58.8" r="9.4"/><rect x="798.8" y="56.2" width="7.8" height="7.8"/><rect x="801.4" y="53.6" width="8" height="8"/></g><rect x="823" y="52.2" width="18" height="2.5" fill="#9a9a9a"/><rect x="823.6" y="56" width="9.4" height="2" fill="#787878"/><rect x="823.6" y="59.8" width="9.4" height="2" fill="#787878"/><rect x="823.6" y="63.4" width="9.4" height="2" fill="#787878"/><path d="M837.3 66 V56.4 M834.2 59.4 L837.3 56.2 L840.4 59.4" stroke="#9a9a9a" stroke-width="1.4" fill="none"/><rect x="852.4" y="52.4" width="8.8" height="2" fill="#787878"/><rect x="852.4" y="56" width="8.8" height="2" fill="#787878"/><rect x="852.4" y="59.6" width="8.8" height="2" fill="#787878"/><rect x="851" y="63.3" width="17.8" height="2.5" fill="#9a9a9a"/><path d="M865.7 52.2 V61.8 M862.6 58.8 L865.7 62 L868.8 58.8" stroke="#9a9a9a" stroke-width="1.4" fill="none"/><rect x="880.4" y="52.4" width="8.8" height="2" fill="#787878"/><rect x="879" y="56.2" width="18" height="2.2" fill="#9a9a9a"/><rect x="880.4" y="59.8" width="8.8" height="2" fill="#787878"/><rect x="880.4" y="63.4" width="8.8" height="2" fill="#787878"/><path d="M893.2 66 V59.6 M890.6 62 L893.2 59.4 L895.8 62" stroke="#9a9a9a" stroke-width="1.3" fill="none"/><rect x="908.2" y="52.6" width="8.8" height="2" fill="#787878"/><rect x="908.2" y="56.2" width="8.8" height="2" fill="#787878"/><rect x="907" y="59.6" width="18" height="2.3" fill="#9a9a9a"/><rect x="908.2" y="63.6" width="8.8" height="2" fill="#787878"/><path d="M921.8 52.2 V58.4 M919.2 56 L921.8 58.6 L924.4 56" stroke="#9a9a9a" stroke-width="1.3" fill="none"/><rect x="941" y="50.2" width="18" height="11.6" rx="2.2" stroke="#a0a0a0" stroke-width="1.8" fill="none"/><path d="M941.6 50.8 L958.4 61.2 M958.4 50.8 L941.6 61.2" stroke="#f0f0f0" stroke-width="1.1"/><path d="M942 64 H958 M942 65.6 H958 M942 67.2 H958" stroke="#8e8e8e" stroke-width="1.2"/><rect x="968.7" y="49.6" width="19" height="18.6" fill="#2c2c2c" stroke="#f4f4f4" stroke-width="1.5"/><rect x="970.0" y="50.9" width="2.5" height="2.5" fill="#e6e6e6" fill-opacity="0.95"/><rect x="973.3" y="50.9" width="2.5" height="2.5" fill="#e6e6e6" fill-opacity="0.83"/><rect x="976.6" y="50.9" width="2.5" height="2.5" fill="#e6e6e6" fill-opacity="0.71"/><rect x="979.9" y="50.9" width="2.5" height="2.5" fill="#e6e6e6" fill-opacity="0.59"/><rect x="983.2" y="50.9" width="2.5" height="2.5" fill="#e6e6e6" fill-opacity="0.47"/><rect x="970.0" y="54.2" width="2.5" height="2.5" fill="#e6e6e6" fill-opacity="0.85"/><rect x="973.3" y="54.2" width="2.5" height="2.5" fill="#e6e6e6" fill-opacity="0.73"/><rect x="976.6" y="54.2" width="2.5" height="2.5" fill="#e6e6e6" fill-opacity="0.61"/><rect x="979.9" y="54.2" width="2.5" height="2.5" fill="#e6e6e6" fill-opacity="0.49"/><rect x="970.0" y="57.5" width="2.5" height="2.5" fill="#e6e6e6" fill-opacity="0.75"/><rect x="973.3" y="57.5" width="2.5" height="2.5" fill="#e6e6e6" fill-opacity="0.63"/><rect x="976.6" y="57.5" width="2.5" height="2.5" fill="#e6e6e6" fill-opacity="0.51"/><rect x="970.0" y="60.8" width="2.5" height="2.5" fill="#e6e6e6" fill-opacity="0.65"/><rect x="973.3" y="60.8" width="2.5" height="2.5" fill="#e6e6e6" fill-opacity="0.53"/><rect x="970.0" y="64.1" width="2.5" height="2.5" fill="#e6e6e6" fill-opacity="0.55"/><rect x="985.7" y="52.0" width="1" height="1" fill="#8a8a8a"/><rect x="982.8" y="54.8" width="1" height="1" fill="#8a8a8a"/><rect x="985.7" y="54.8" width="1" height="1" fill="#8a8a8a"/><rect x="979.9" y="57.6" width="1" height="1" fill="#8a8a8a"/><rect x="982.8" y="57.6" width="1" height="1" fill="#8a8a8a"/><rect x="985.7" y="57.6" width="1" height="1" fill="#8a8a8a"/><rect x="977.0" y="60.4" width="1" height="1" fill="#8a8a8a"/><rect x="979.9" y="60.4" width="1" height="1" fill="#8a8a8a"/><rect x="982.8" y="60.4" width="1" height="1" fill="#8a8a8a"/><rect x="985.7" y="60.4" width="1" height="1" fill="#8a8a8a"/><rect x="974.1" y="63.2" width="1" height="1" fill="#8a8a8a"/><rect x="977.0" y="63.2" width="1" height="1" fill="#8a8a8a"/><rect x="979.9" y="63.2" width="1" height="1" fill="#8a8a8a"/><rect x="982.8" y="63.2" width="1" height="1" fill="#8a8a8a"/><rect x="985.7" y="63.2" width="1" height="1" fill="#8a8a8a"/><rect x="971.2" y="66.0" width="1" height="1" fill="#8a8a8a"/><rect x="974.1" y="66.0" width="1" height="1" fill="#8a8a8a"/><rect x="977.0" y="66.0" width="1" height="1" fill="#8a8a8a"/><rect x="979.9" y="66.0" width="1" height="1" fill="#8a8a8a"/><rect x="982.8" y="66.0" width="1" height="1" fill="#8a8a8a"/><rect x="985.7" y="66.0" width="1" height="1" fill="#8a8a8a"/><rect x="997.7" y="50.8" width="16.6" height="16.6" fill="#2c2c2c" stroke="#f4f4f4" stroke-width="1.5"/><path d="M998.6 56 L1003 51.6 M998.6 61 L1008 51.6 M998.6 66 L1013 51.6" stroke="#f4f4f4" stroke-width="1.9"/><path d="M998.6 66.6 L1013.6 51.6" stroke="#f4f4f4" stroke-width="1.2"/><rect x="1021" y="47" width="26.2" height="23.8" fill="#4f93d3"/><g stroke="#ffffff" stroke-width="1.2" fill="#ffffff" fill-opacity="0.08"><circle cx="1034" cy="55.8" r="6.9"/><circle cx="1030.8" cy="61.8" r="6.9"/><circle cx="1037.3" cy="61.8" r="6.9"/></g><g transform="translate(1068.1 58.4) rotate(-45) scale(0.9)"><path d="M-7.2 -7.6 H-3.5 V0 A3.5 3.5 0 0 0 3.5 0 V-7.6 H7.2 V0 A7.2 7.2 0 0 1 -7.2 0 Z" fill="#2a2a2a" stroke="#f4f4f4" stroke-width="1.2" stroke-linejoin="round"/><rect x="-6.7" y="-7.1" width="2.7" height="2.2" fill="#2a2a2a"/><rect x="4.0" y="-7.1" width="2.7" height="2.2" fill="#2a2a2a"/><path d="M-7.2 -4.6 H-3.5 M3.5 -4.6 H7.2" stroke="#f4f4f4" stroke-width="0.96"/></g><g transform="translate(1071 62.2)"><rect x="-1.5" y="-6.6" width="3" height="3.4" fill="#262626" stroke="#f0f0f0" stroke-width="0.8" transform="rotate(22.5)"/><rect x="-1.5" y="-6.6" width="3" height="3.4" fill="#262626" stroke="#f0f0f0" stroke-width="0.8" transform="rotate(67.5)"/><rect x="-1.5" y="-6.6" width="3" height="3.4" fill="#262626" stroke="#f0f0f0" stroke-width="0.8" transform="rotate(112.5)"/><rect x="-1.5" y="-6.6" width="3" height="3.4" fill="#262626" stroke="#f0f0f0" stroke-width="0.8" transform="rotate(157.5)"/><rect x="-1.5" y="-6.6" width="3" height="3.4" fill="#262626" stroke="#f0f0f0" stroke-width="0.8" transform="rotate(202.5)"/><rect x="-1.5" y="-6.6" width="3" height="3.4" fill="#262626" stroke="#f0f0f0" stroke-width="0.8" transform="rotate(247.5)"/><rect x="-1.5" y="-6.6" width="3" height="3.4" fill="#262626" stroke="#f0f0f0" stroke-width="0.8" transform="rotate(292.5)"/><rect x="-1.5" y="-6.6" width="3" height="3.4" fill="#262626" stroke="#f0f0f0" stroke-width="0.8" transform="rotate(337.5)"/><circle r="4.6" fill="#262626" stroke="#262626" stroke-width="0.6"/><circle r="2.6" fill="#ffffff"/></g><rect x="1083" y="47" width="26.2" height="23.8" fill="#4f93d3"/><g transform="translate(1097.9 60.6) rotate(-45) scale(1.0)"><path d="M-7.2 -7.6 H-3.5 V0 A3.5 3.5 0 0 0 3.5 0 V-7.6 H7.2 V0 A7.2 7.2 0 0 1 -7.2 0 Z" fill="#1e1e1e" stroke="#ffffff" stroke-width="1.0" stroke-linejoin="round"/><rect x="-6.7" y="-7.1" width="2.7" height="2.2" fill="#454545"/><rect x="4.0" y="-7.1" width="2.7" height="2.2" fill="#454545"/><path d="M-7.2 -4.6 H-3.5 M3.5 -4.6 H7.2" stroke="#ffffff" stroke-width="0.8"/></g><rect x="1114.6" y="49.6" width="19" height="18.6" stroke="#f4f4f4" stroke-width="1.4" stroke-dasharray="3.2 1.5" fill="none"/><g transform="translate(1125.8 60.5) rotate(-45) scale(0.93)"><path d="M-7.2 -7.6 H-3.5 V0 A3.5 3.5 0 0 0 3.5 0 V-7.6 H7.2 V0 A7.2 7.2 0 0 1 -7.2 0 Z" fill="#2a2a2a" stroke="#dcdcdc" stroke-width="1.1" stroke-linejoin="round"/><rect x="-6.7" y="-7.1" width="2.7" height="2.2" fill="#2a2a2a"/><rect x="4.0" y="-7.1" width="2.7" height="2.2" fill="#2a2a2a"/><path d="M-7.2 -4.6 H-3.5 M3.5 -4.6 H7.2" stroke="#dcdcdc" stroke-width="0.8800000000000001"/></g><rect x="1153.6" y="56" width="12.6" height="6.4" stroke="#7c7c7c" stroke-width="1.1" fill="none"/><path d="M1153.6 56 L1151.2 53.4 M1166.2 56 L1168.6 53.4 M1153.6 62.4 L1151.2 65 M1166.2 62.4 L1168.6 65" stroke="#707070" stroke-width="1.1"/><g transform="translate(213.2 91)" stroke="#bdbdbd" stroke-width="1" fill="none"><path d="M-2.4 -9.6 H2.4 L3.4 -7.6 L6 -8.4 L8.6 -5.8 L7.6 -3.4 L9.6 -2.4 V2.4 L7.6 3.4 L8.6 5.8 L6 8.4 L3.4 7.6 L2.4 9.6 H-2.4 L-3.4 7.6 L-6 8.4 L-8.6 5.8 L-7.6 3.4 L-9.6 2.4 V-2.4 L-7.6 -3.4 L-8.6 -5.8 L-6 -8.4 L-3.4 -7.6 Z"/><circle r="6.2"/><circle r="1.6"/><circle cx="0" cy="-3.9" r="1"/><circle cx="0" cy="3.9" r="1"/><circle cx="-3.9" cy="0" r="1"/><circle cx="3.9" cy="0" r="1"/></g><g transform="translate(259.2 91.6)"><rect x="-2.4" y="-2.4" width="4.8" height="4.8" stroke="#d8d8d8" stroke-width="1.1" fill="none"/><path d="M-2.2 -4.4 L0 -6.6 L2.2 -4.4 Z M-2.2 4.4 L0 6.6 L2.2 4.4 Z M-4.4 -2.2 L-6.6 0 L-4.4 2.2 Z M4.4 -2.2 L6.6 0 L4.4 2.2 Z" fill="#d8d8d8"/></g></svg>
<svg style="left:0;top:0" width="1203" height="793" viewBox="0 0 1203 793"><path d="M47.2 162.0 V167.8 H41.4 Z" fill="#c4c4c4"/><path d="M47.2 195.0 V200.8 H41.4 Z" fill="#c4c4c4"/><path d="M47.2 228.0 V233.8 H41.4 Z" fill="#c4c4c4"/><path d="M47.2 261.0 V266.8 H41.4 Z" fill="#c4c4c4"/><path d="M47.2 294.0 V299.8 H41.4 Z" fill="#c4c4c4"/><path d="M47.2 337.8 V343.6 H41.4 Z" fill="#c4c4c4"/><path d="M47.2 370.8 V376.6 H41.4 Z" fill="#c4c4c4"/><path d="M47.2 403.8 V409.6 H41.4 Z" fill="#c4c4c4"/><path d="M47.2 436.8 V442.6 H41.4 Z" fill="#c4c4c4"/><path d="M47.2 469.9 V475.7 H41.4 Z" fill="#c4c4c4"/><path d="M47.2 502.9 V508.7 H41.4 Z" fill="#c4c4c4"/><path d="M47.2 546.8 V552.6 H41.4 Z" fill="#c4c4c4"/><path d="M47.2 579.9 V585.7 H41.4 Z" fill="#c4c4c4"/><path d="M47.2 613.0 V618.8 H41.4 Z" fill="#c4c4c4"/><path d="M47.2 646.0 V651.8 H41.4 Z" fill="#c4c4c4"/><path d="M47.2 690.0 V695.8 H41.4 Z" fill="#c4c4c4"/><path d="M47.2 722.9 V728.7 H41.4 Z" fill="#c4c4c4"/><path d="M47.2 755.9 V761.7 H41.4 Z" fill="#c4c4c4"/><path d="M30.7 147 V161.9 L34.1 159 L37.1 165.5 L39.4 164.4 L36.5 158.2 L41.1 157.2 Z" fill="#e8e8e8"/><path d="M28.6 180 L43.3 190.5 L34.2 192.3 L30.8 198.3 Z" fill="#e8e8e8"/><path d="M39.7 213.2 A13.2 13.2 0 0 0 26.2 226.4 H39.7 Z" fill="#5c5c5c"/><path d="M39.7 213.2 A13.2 13.2 0 0 0 26.2 226.4" stroke="#e8e8e8" stroke-width="1.3" fill="none"/><path d="M34 219 V229.5 L36.3 227.2 L38.5 231.5 L40.3 230.6 L38.1 226.3 L41.6 225.6 Z" fill="#e8e8e8" stroke="#424242" stroke-width="0.5"/><g transform="translate(37.6 257.4) rotate(-45)"><path d="M-6.2 -7.4 H-2.4 V0 A2.4 2.4 0 0 0 2.4 0 V-7.4 H6.2 V0 A6.2 6.2 0 0 1 -6.2 0 Z" fill="#e4e4e4"/><rect x="-6.2" y="-7.4" width="3.8" height="2.8" fill="#8c8c8c"/><rect x="2.4" y="-7.4" width="3.8" height="2.8" fill="#8c8c8c"/><path d="M-5 -9 L-4.3 -12.6 L-3.4 -10.6 L-2.4 -13.4 M3.4 -9 L4.1 -12.6 L5 -10.6 L6 -13.4" stroke="#e4e4e4" stroke-width="1.1" fill="none"/></g><rect x="26.5" y="281" width="17.2" height="14.2" stroke="#f4f4f4" stroke-width="1.9" stroke-dasharray="3.3 1.9" stroke-dashoffset="1.6" fill="none"/><g transform="translate(31.6 335.6) rotate(45) scale(1.0)"><path d="M0 0 L-3.4 -6.4 Q-3.6 -9.4 -2.4 -11.4 H2.4 Q3.6 -9.4 3.4 -6.4 Z" fill="#e6e6e6"/><path d="M0 -1 V-6.6" stroke="#424242" stroke-width="0.9"/><circle cx="0" cy="-7" r="1" fill="#424242"/><rect x="-2.9" y="-17" width="5.8" height="4.6" fill="#c8c8c8"/></g><path d="M25.2 328.2 Q30 339.4 38.2 340.4" stroke="#d8d8d8" stroke-width="0.9" fill="none"/><path d="M29.4 326 Q28.6 331.4 31.6 335.6 Q35 338.2 36.2 341.4" stroke="#d0d0d0" stroke-width="0.8" fill="none"/><g transform="translate(33 368.3) rotate(45) scale(0.86)"><path d="M0 0 L-3.4 -6.4 Q-3.6 -9.4 -2.4 -11.4 H2.4 Q3.6 -9.4 3.4 -6.4 Z" fill="#e6e6e6"/><path d="M0 -1 V-6.6" stroke="#424242" stroke-width="0.9"/><circle cx="0" cy="-7" r="1" fill="#424242"/><rect x="-2.9" y="-17" width="5.8" height="4.6" fill="#c8c8c8"/></g><path d="M26.4 360.6 Q30.4 361.6 29.4 364.4 Q26.6 367 27.6 369.4 Q29.6 371.4 32.4 369.4" stroke="#e0e0e0" stroke-width="1.1" fill="none"/><rect x="27" y="391.1" width="16.2" height="14" rx="2.4" fill="#6c6c6c" stroke="#c8c8c8" stroke-width="1.5"/><text x="27.2" y="438.9" font-family="'Liberation Serif',serif" font-weight="bold" font-size="23.4" fill="#e8e8e8" stroke="#e8e8e8" stroke-width="1.1" stroke-linejoin="miter">T</text><path d="M29.2 464 L40.4 455.8 L44.2 466.4 L35.8 472.6 Z" fill="#e8e8e8"/><path d="M31.8 463.4 L39.6 458.4 L41 465.2 Z" fill="#686868"/><path d="M40 455.4 L41.2 454.6" stroke="#e8e8e8" stroke-width="1"/><ellipse cx="28" cy="469.6" rx="2.2" ry="2.6" fill="#c4c4c4" transform="rotate(30 28 469.6)"/><path d="M25.8 505.4 Q26.4 494.4 43.6 488.4 Q45.4 489.4 44 492 Q40.8 500.6 28 505.6 Q26.4 506 25.8 505.4 Z" fill="#6a6a6a" stroke="#e8e8e8" stroke-width="1.1"/><path d="M30.6 491.8 L40.4 502.4" stroke="#e8e8e8" stroke-width="1"/><rect x="29.2" y="490.2" width="2.6" height="2.6" fill="#424242" stroke="#e8e8e8" stroke-width="0.8"/><rect x="34.2" y="495.6" width="2.4" height="2.4" fill="#6a6a6a" stroke="#e8e8e8" stroke-width="0.8"/><rect x="39.2" y="501.2" width="2.6" height="2.6" fill="#424242" stroke="#e8e8e8" stroke-width="0.8"/><defs><pattern id="dotp" width="1.7" height="1.7" patternUnits="userSpaceOnUse"><rect x="0" y="0" width="0.95" height="0.95" fill="#cfcfcf"/></pattern></defs><path d="M25.2 532.6 L29.8 531.8 L35.4 538.4 L40.6 533.4 L44.6 534.6 L44.4 541 L41.8 544.6 L43.6 549.8 L28.4 550.2 L30.4 545.4 L26.8 541.4 Z" fill="#626262" fill-opacity="0.55"/><path d="M25.2 532.6 L29.8 531.8 L35.4 538.4 L40.6 533.4 L44.6 534.6 L44.4 541 L41.8 544.6 L43.6 549.8 L28.4 550.2 L30.4 545.4 L26.8 541.4 Z" fill="url(#dotp)"/><path d="M43.7 532.4 L38.6 538.8" stroke="#f4f4f4" stroke-width="1.8" stroke-linecap="round"/><circle cx="36.5" cy="541.6" r="1.7" fill="#f4f4f4"/><defs><linearGradient id="gt" x1="0" y1="1" x2="1" y2="0"><stop offset="0" stop-color="#9a9a9a"/><stop offset="1" stop-color="#787878"/></linearGradient></defs><path d="M25.8 567.6 Q35 566 43.8 567.4 V580.4 Q35 582 25.8 580.8 Z" fill="url(#gt)" stroke="#c4c4c4" stroke-width="1.1"/><path d="M29.4 578 L39 568.8" stroke="#d0d0d0" stroke-width="0.9" stroke-dasharray="1.4 1"/><circle cx="29.2" cy="578.2" r="1.5" fill="#b8b8b8"/><circle cx="39.2" cy="568.6" r="1.5" fill="#b8b8b8"/><path d="M27 599.4 Q35.1 595.4 43.2 599.4 Q47 607 43.2 614.8 Q35.1 618.6 27 614.8 Q23.4 607 27 599.4 Z" fill="#8a8a8a" stroke="#d4d4d4" stroke-width="1" stroke-dasharray="2 0.6"/><path d="M29.36 646.14 A15 15 0 0 1 40.84 646.14" stroke="#cfcfcf" stroke-width="0.9" fill="none"/><path d="M28.02 642.91 A18.5 18.5 0 0 1 42.18 642.91" stroke="#cfcfcf" stroke-width="0.9" fill="none"/><path d="M26.68 639.67 A22 22 0 0 1 43.52 639.67" stroke="#cfcfcf" stroke-width="0.9" fill="none"/><path d="M25.15 635.98 A26 26 0 0 1 45.05 635.98" stroke="#cfcfcf" stroke-width="0.9" fill="none"/><path d="M29.36 646.14 L25.15 635.98" stroke="#cfcfcf" stroke-width="0.8"/><path d="M31.22 645.51 L28.37 634.89" stroke="#cfcfcf" stroke-width="0.8"/><path d="M33.14 645.13 L31.71 634.22" stroke="#cfcfcf" stroke-width="0.8"/><path d="M35.10 645.00 L35.10 634.00" stroke="#f0f0f0" stroke-width="1.8"/><path d="M37.06 645.13 L38.49 634.22" stroke="#cfcfcf" stroke-width="0.8"/><path d="M38.98 645.51 L41.83 634.89" stroke="#cfcfcf" stroke-width="0.8"/><path d="M40.84 646.14 L45.05 635.98" stroke="#cfcfcf" stroke-width="0.8"/><defs><linearGradient id="gs" x1="0" x2="1"><stop offset="0" stop-color="#f6f6f6"/><stop offset="0.5" stop-color="#c0c0c0"/><stop offset="1" stop-color="#808080"/></linearGradient></defs><rect x="24.9" y="674" width="13.2" height="20" fill="url(#gs)"/><rect x="28" y="710" width="11" height="10.6" rx="2.2" fill="#6a6a6a" stroke="#9a9a9a" stroke-width="1"/><rect x="25.8" y="708" width="10.6" height="10.4" rx="2.4" fill="#7c7c7c" stroke="#f4f4f4" stroke-width="1.4"/><path d="M34 716 L44.4 719.6 L40.4 722 L38.6 726.8 Z" fill="#111" stroke="#f4f4f4" stroke-width="1.2" stroke-linejoin="round"/><circle cx="32.2" cy="745" r="4.2" fill="#e8e8e8"/><path d="M30.4 748 H34 L34.6 752 H29.8 Z" fill="#e8e8e8"/><rect x="26" y="751.8" width="12.4" height="5.4" rx="1.8" fill="#e8e8e8"/><rect x="27.4" y="758" width="9.6" height="1" fill="#c0c0c0"/><path d="M36.07 744.44 L44.73 745.96" stroke="#d0d0d0" stroke-width="0.9"/><path d="M37.88 741.60 L42.92 748.80" stroke="#d0d0d0" stroke-width="0.9"/><path d="M41.16 740.87 L39.64 749.53" stroke="#d0d0d0" stroke-width="0.9"/><path d="M44.00 742.68 L36.80 747.72" stroke="#d0d0d0" stroke-width="0.9"/><circle cx="43.55" cy="745.76" r="0.9" fill="#d0d0d0"/><circle cx="42.24" cy="747.82" r="0.9" fill="#d0d0d0"/><circle cx="39.84" cy="748.35" r="0.9" fill="#d0d0d0"/><circle cx="37.78" cy="747.04" r="0.9" fill="#d0d0d0"/><circle cx="37.25" cy="744.64" r="0.9" fill="#d0d0d0"/><circle cx="38.56" cy="742.58" r="0.9" fill="#d0d0d0"/><circle cx="40.96" cy="742.05" r="0.9" fill="#d0d0d0"/><circle cx="43.02" cy="743.36" r="0.9" fill="#d0d0d0"/></svg>
<svg style="left:0;top:0" width="1203" height="793" viewBox="0 0 1203 793"><g stroke="#a8a8a8" stroke-width="1.3" fill="#424242"><path d="M916.8 567 H931.4 M916.8 573.2 H931.4"/><circle cx="921.8" cy="567" r="2.3"/><circle cx="926.8" cy="573.2" r="2.3"/></g><g stroke="#a8a8a8" stroke-width="1.3" fill="#424242"><rect x="945.4" y="563.4" width="9.4" height="9.8"/><rect x="941.3" y="567.4" width="9.4" height="9.4"/></g><g stroke="#a8a8a8" stroke-width="1" fill="none"><circle cx="971.8" cy="570" r="7.5"/><circle cx="970.3" cy="571" r="3.9"/><path d="M967.6 568 A5 5 0 0 1 976.6 568.6 A5 5 0 0 1 973.6 574.2"/></g><g stroke="#a8a8a8" stroke-width="1" fill="none"><rect x="989.8" y="563.5" width="12.8" height="12.8"/><path d="M989.8 562.4 V563.5 M1002.6 562.4 V563.5 M989.8 576.3 V577.4 M1002.6 576.3 V577.4 M988.7 563.5 H989.8 M1002.6 563.5 H1003.7 M988.7 576.3 H989.8 M1002.6 576.3 H1003.7"/><rect x="992.8" y="568.4" width="5" height="5"/><rect x="994.6" y="566.6" width="5" height="5"/></g><g stroke="#8a8a8a" stroke-width="1" fill="none"><rect x="1014" y="567" width="9.4" height="9.4"/><rect x="1017.2" y="563.6" width="9" height="9.6"/><path d="M1014 565.8 V567 M1012.8 567 H1014 M1023.4 576.4 V577.6 M1023.4 576.4 H1024.6 M1014 576.4 V577.6 M1012.8 576.4 H1014 M1017.2 562.4 V563.6 M1026.2 562.4 V563.6 M1026.2 563.6 H1027.4 M1026.2 573.2 H1027.4"/></g><g stroke="#8a8a8a" stroke-width="0.8" fill="none"><rect x="1036.6" y="562.6" width="15.2" height="15"/><path d="M1041 562.6 Q1040.4 566 1042 569 Q1043 573 1041.6 577.6 M1046.6 562.6 Q1047.6 566.4 1046 569.4 Q1045 573.6 1047 577.6 M1036.6 567.6 Q1040 566.4 1043 568 Q1047 569 1051.8 567 M1036.6 573 Q1040 574.4 1043 572.6 Q1047 571.6 1051.8 573.4"/></g><g stroke="#7c7c7c" stroke-width="1" fill="none"><path d="M1061.6 566.4 H1064.6 L1065.8 564 H1070.2 L1071.4 566.4 H1074.4 Q1075.6 566.4 1075.6 567.6 V575 Q1075.6 576.2 1074.4 576.2 H1061.6 Q1060.4 576.2 1060.4 575 V567.6 Q1060.4 566.4 1061.6 566.4 Z"/><circle cx="1067.9" cy="571" r="3.5"/><path d="M1068.4 568.8 A2.2 2.2 0 0 1 1070.2 570.6" stroke-width="0.8"/></g><g stroke="#f6f6f6" stroke-width="1.4" fill="#424242"><rect x="1088.4" y="562.8" width="10.8" height="10.8" rx="2"/><rect x="1085" y="566.2" width="11" height="10.8" rx="2"/><path d="M1088 571.6 H1093 M1090.5 569.1 V574.1" stroke-width="1.3"/></g><g stroke="#8a8a8a" stroke-width="1.1" fill="none"><rect x="1108.8" y="562.7" width="12.6" height="12.4" rx="1.2"/><path d="M1123.4 565 V576 Q1123.4 577 1122.4 577 H1111" /><path d="M1111.4 569 H1118.2 M1114.8 565.6 V572.4" stroke-width="1.6"/></g><g stroke="#7c7c7c" stroke-width="1.1" fill="none"><path d="M1133.4 565.4 H1146.6 M1137.4 565.2 V563.4 Q1137.4 562.8 1138 562.8 H1142 Q1142.6 562.8 1142.6 563.4 V565.2 M1135 565.6 L1136 576.4 Q1136.2 577.4 1137.2 577.4 H1142.8 Q1143.8 577.4 1144 576.4 L1145 565.6"/><path d="M1138 567.6 V575.4 M1140 567.6 V575.4 M1142 567.6 V575.4" stroke-width="0.9"/></g></svg>
<svg style="left:0;top:0" width="1203" height="793" viewBox="0 0 1203 793"><defs>
<clipPath id="wmc"><rect x="770" y="709.4" width="433" height="35.7"/><rect x="989.5" y="709.4" width="28" height="100"/></clipPath>
<filter id="goo" filterUnits="userSpaceOnUse" x="770" y="685" width="433" height="108" color-interpolation-filters="sRGB">
<feMorphology in="SourceAlpha" operator="dilate" radius="5 2" result="m1"/><feMorphology in="SourceAlpha" operator="dilate" radius="2 5" result="m2"/><feMorphology in="SourceAlpha" operator="dilate" radius="4 3" result="m3"/><feMorphology in="SourceAlpha" operator="dilate" radius="3 4" result="m4"/><feMerge result="m"><feMergeNode in="m1"/><feMergeNode in="m2"/><feMergeNode in="m3"/><feMergeNode in="m4"/></feMerge>
<feGaussianBlur in="m" stdDeviation="1.5" result="b"/>
<feColorMatrix in="b" type="matrix" values="0 0 0 0 1  0 0 0 0 1  0 0 0 0 1  0 0 0 8 -2.9" result="w"/>
<feOffset in="w" dx="2.4" dy="3" result="o"/>
<feGaussianBlur in="o" stdDeviation="0.9" result="ob"/>
<feColorMatrix in="ob" type="matrix" values="0 0 0 0 0.105  0 0 0 0 0.215  0 0 0 0 0.36  0 0 0 1.15 0" result="sh"/>
<feGaussianBlur in="o" stdDeviation="3" result="ob2"/>
<feColorMatrix in="ob2" type="matrix" values="0 0 0 0 0.09  0 0 0 0 0.14  0 0 0 0 0.24  0 0 0 0.45 0" result="sh2"/>
<feMerge><feMergeNode in="sh2"/><feMergeNode in="sh"/><feMergeNode in="w"/></feMerge>
</filter></defs>
<g filter="url(#goo)"><g clip-path="url(#wmc)"><text transform="translate(0 743.93) scale(0.2320 0.2896)" x="3450.8 3598.8 3684.2 3837.7 3997.8 4148.2 4312.7 4410.0 4546.4 4623.1 4758.1 4917.7" y="0" font-family="'DejaVu Sans','Liberation Sans',sans-serif" font-weight="200" font-size="200" fill="#ffffff">alonggjx.com</text></g></g></svg>
</div></body></html>
